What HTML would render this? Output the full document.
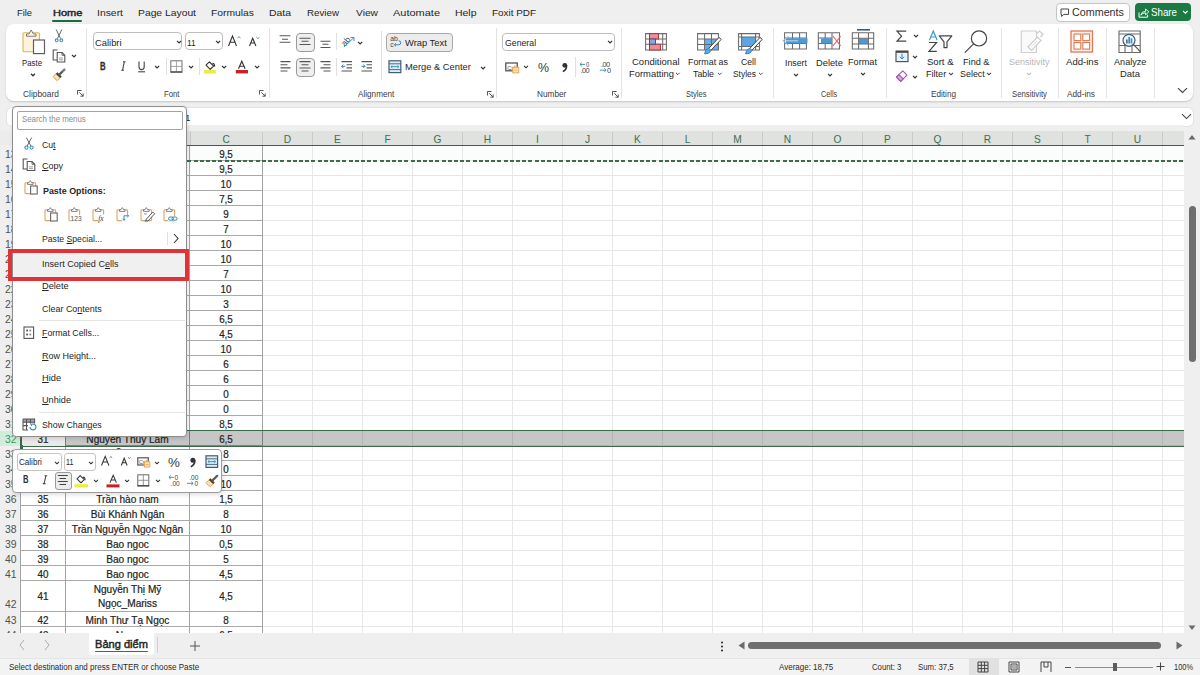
<!DOCTYPE html>
<html><head><meta charset="utf-8"><style>
html,body{margin:0;padding:0;width:1200px;height:675px;overflow:hidden;background:#efefef;}
body{position:relative;font-family:"Liberation Sans",sans-serif;}
.b{position:absolute;}
.t{position:absolute;white-space:nowrap;}
svg{overflow:visible;}
.g .t{-webkit-text-stroke:0.2px currentColor;}
.g .rh{-webkit-text-stroke:0;}
</style></head><body>
<div class="b" style="left:0px;top:0px;width:1200px;height:675px;background:#efefef;"></div>
<div class="t" style="left:17.00px;top:7px;font-size:9.8px;line-height:11.76px;color:#262626;font-weight:normal;transform:scaleX(0.9507);transform-origin:0 0;">File</div>
<div class="t" style="left:52.50px;top:7px;font-size:9.8px;line-height:11.76px;color:#262626;font-weight:normal;transform:scaleX(1.1274);transform-origin:0 0;-webkit-text-stroke:0.45px #262626;">Home</div>
<div class="t" style="left:96.50px;top:7px;font-size:9.8px;line-height:11.76px;color:#262626;font-weight:normal;transform:scaleX(1.0612);transform-origin:0 0;">Insert</div>
<div class="t" style="left:138.00px;top:7px;font-size:9.8px;line-height:11.76px;color:#262626;font-weight:normal;transform:scaleX(1.0540);transform-origin:0 0;">Page Layout</div>
<div class="t" style="left:211.00px;top:7px;font-size:9.8px;line-height:11.76px;color:#262626;font-weight:normal;transform:scaleX(1.0522);transform-origin:0 0;">Formulas</div>
<div class="t" style="left:269.00px;top:7px;font-size:9.8px;line-height:11.76px;color:#262626;font-weight:normal;transform:scaleX(1.0614);transform-origin:0 0;">Data</div>
<div class="t" style="left:307.00px;top:7px;font-size:9.8px;line-height:11.76px;color:#262626;font-weight:normal;transform:scaleX(0.9955);transform-origin:0 0;">Review</div>
<div class="t" style="left:355.50px;top:7px;font-size:9.8px;line-height:11.76px;color:#262626;font-weight:normal;transform:scaleX(1.0441);transform-origin:0 0;">View</div>
<div class="t" style="left:392.50px;top:7px;font-size:9.8px;line-height:11.76px;color:#262626;font-weight:normal;transform:scaleX(1.1205);transform-origin:0 0;">Automate</div>
<div class="t" style="left:454.50px;top:7px;font-size:9.8px;line-height:11.76px;color:#262626;font-weight:normal;transform:scaleX(1.0676);transform-origin:0 0;">Help</div>
<div class="t" style="left:492.00px;top:7px;font-size:9.8px;line-height:11.76px;color:#262626;font-weight:normal;transform:scaleX(1.0101);transform-origin:0 0;">Foxit PDF</div>
<div class="b" style="left:52px;top:19.5px;width:30px;height:2.5px;background:#1e6b41;border-radius:1px;"></div>
<div class="b" style="left:1056px;top:2.5px;width:72px;height:17px;background:#fff;border:1px solid #c4c4c4;border-radius:4px;"></div>
<div class="t" style="left:1072.00px;top:7px;font-size:10.2px;line-height:12.24px;color:#303030;font-weight:normal;transform:scaleX(1.0544);transform-origin:0 0;">Comments</div>
<div class="b" style="left:1135px;top:2.5px;width:56px;height:18px;background:#1b7a43;border-radius:4px;"></div>
<div class="t" style="left:1151.30px;top:7px;font-size:10.2px;line-height:12.24px;color:#fff;font-weight:normal;transform:scaleX(0.9547);transform-origin:0 0;">Share</div>
<div class="b" style="left:6px;top:24px;width:1187px;height:77px;background:#fff;border-radius:8px;box-shadow:0 1px 2px rgba(0,0,0,0.18);"></div>
<div class="b" style="left:86px;top:28px;width:1px;height:70px;background:#e3e3e3;"></div>
<div class="b" style="left:268.5px;top:28px;width:1px;height:70px;background:#e3e3e3;"></div>
<div class="b" style="left:495.5px;top:28px;width:1px;height:70px;background:#e3e3e3;"></div>
<div class="b" style="left:620.5px;top:28px;width:1px;height:70px;background:#e3e3e3;"></div>
<div class="b" style="left:772.5px;top:28px;width:1px;height:70px;background:#e3e3e3;"></div>
<div class="b" style="left:885.5px;top:28px;width:1px;height:70px;background:#e3e3e3;"></div>
<div class="b" style="left:1001px;top:28px;width:1px;height:70px;background:#e3e3e3;"></div>
<div class="b" style="left:1057.5px;top:28px;width:1px;height:70px;background:#e3e3e3;"></div>
<div class="b" style="left:1105.5px;top:28px;width:1px;height:70px;background:#e3e3e3;"></div>
<div class="b" style="left:1154px;top:28px;width:1px;height:70px;background:#e3e3e3;"></div>
<div class="b" style="left:335.5px;top:33px;width:1px;height:17px;background:#e0e0e0;"></div>
<div class="b" style="left:335.5px;top:58px;width:1px;height:18px;background:#e0e0e0;"></div>
<div class="b" style="left:380.5px;top:31px;width:1px;height:49px;background:#e0e0e0;"></div>
<div class="b" style="left:165.5px;top:58px;width:1px;height:17px;background:#e0e0e0;"></div>
<div class="b" style="left:199px;top:58px;width:1px;height:17px;background:#e0e0e0;"></div>
<div class="b" style="left:574.5px;top:57px;width:1px;height:20px;background:#e0e0e0;"></div>
<div class="t" style="left:23.30px;top:89px;font-size:8.6px;line-height:10.32px;color:#3b3b3b;font-weight:normal;transform:scaleX(0.9753);transform-origin:0 0;">Clipboard</div>
<div class="t" style="left:163.70px;top:89px;font-size:8.6px;line-height:10.32px;color:#3b3b3b;font-weight:normal;transform:scaleX(0.9012);transform-origin:0 0;">Font</div>
<div class="t" style="left:358.00px;top:89px;font-size:8.6px;line-height:10.32px;color:#3b3b3b;font-weight:normal;transform:scaleX(0.9496);transform-origin:0 0;">Alignment</div>
<div class="t" style="left:537.00px;top:89px;font-size:8.6px;line-height:10.32px;color:#3b3b3b;font-weight:normal;transform:scaleX(0.9584);transform-origin:0 0;">Number</div>
<div class="t" style="left:686.30px;top:89px;font-size:8.6px;line-height:10.32px;color:#3b3b3b;font-weight:normal;transform:scaleX(0.8748);transform-origin:0 0;">Styles</div>
<div class="t" style="left:820.80px;top:89px;font-size:8.6px;line-height:10.32px;color:#3b3b3b;font-weight:normal;transform:scaleX(0.8466);transform-origin:0 0;">Cells</div>
<div class="t" style="left:930.80px;top:89px;font-size:8.6px;line-height:10.32px;color:#3b3b3b;font-weight:normal;transform:scaleX(0.9500);transform-origin:0 0;">Editing</div>
<div class="t" style="left:1011.80px;top:89px;font-size:8.6px;line-height:10.32px;color:#3b3b3b;font-weight:normal;transform:scaleX(0.9044);transform-origin:0 0;">Sensitivity</div>
<div class="t" style="left:1067.00px;top:89px;font-size:8.6px;line-height:10.32px;color:#3b3b3b;font-weight:normal;transform:scaleX(0.9604);transform-origin:0 0;">Add-ins</div>
<div class="t" style="left:22.00px;top:58px;font-size:9.2px;line-height:11.04px;color:#262626;font-weight:normal;transform:scaleX(0.8508);transform-origin:0 0;">Paste</div>
<div class="b" style="left:93px;top:32px;width:89px;height:18px;background:#fff;border:1px solid #bdbdbd;border-radius:4px;box-sizing:border-box;"></div>
<div class="t" style="left:94.80px;top:37px;font-size:9.6px;line-height:11.52px;color:#262626;font-weight:normal;transform:scaleX(0.9774);transform-origin:0 0;">Calibri</div>
<div class="b" style="left:184.5px;top:32px;width:38px;height:18px;background:#fff;border:1px solid #bdbdbd;border-radius:4px;box-sizing:border-box;"></div>
<div class="t" style="left:187.10px;top:37px;font-size:9.6px;line-height:11.52px;color:#262626;font-weight:normal;transform:scaleX(0.8714);transform-origin:0 0;">11</div>
<div class="b" style="left:385.5px;top:32.5px;width:67.5px;height:19px;background:#ececec;border:1.3px solid #a8a8a8;border-radius:4px;box-sizing:border-box;"></div>
<div class="t" style="left:404.50px;top:38px;font-size:9.3px;line-height:11.16px;color:#262626;font-weight:normal;transform:scaleX(1.0066);transform-origin:0 0;">Wrap Text</div>
<div class="t" style="left:404.50px;top:62px;font-size:9.3px;line-height:11.16px;color:#262626;font-weight:normal;transform:scaleX(1.0022);transform-origin:0 0;">Merge &amp; Center</div>
<div class="b" style="left:295.5px;top:32.5px;width:19px;height:19px;background:#efefef;border:1.3px solid #9a9a9a;border-radius:4px;box-sizing:border-box;"></div>
<div class="b" style="left:295.5px;top:57.5px;width:19px;height:19px;background:#efefef;border:1.3px solid #9a9a9a;border-radius:4px;box-sizing:border-box;"></div>
<div class="b" style="left:502px;top:32.5px;width:113px;height:18.5px;background:#fff;border:1px solid #bdbdbd;border-radius:4px;box-sizing:border-box;"></div>
<div class="t" style="left:504.70px;top:38px;font-size:9.3px;line-height:11.16px;color:#262626;font-weight:normal;transform:scaleX(0.9394);transform-origin:0 0;">General</div>
<div class="t" style="left:632.00px;top:57px;font-size:9.2px;line-height:11.04px;color:#262626;font-weight:normal;transform:scaleX(1.0337);transform-origin:0 0;">Conditional</div>
<div class="t" style="left:629.00px;top:69px;font-size:9.2px;line-height:11.04px;color:#262626;font-weight:normal;transform:scaleX(1.0233);transform-origin:0 0;">Formatting</div>
<div class="t" style="left:688.00px;top:57px;font-size:9.2px;line-height:11.04px;color:#262626;font-weight:normal;transform:scaleX(0.9662);transform-origin:0 0;">Format as</div>
<div class="t" style="left:693.00px;top:69px;font-size:9.2px;line-height:11.04px;color:#262626;font-weight:normal;transform:scaleX(0.9551);transform-origin:0 0;">Table</div>
<div class="t" style="left:741.30px;top:57px;font-size:9.2px;line-height:11.04px;color:#262626;font-weight:normal;transform:scaleX(0.9452);transform-origin:0 0;">Cell</div>
<div class="t" style="left:733.00px;top:69px;font-size:9.2px;line-height:11.04px;color:#262626;font-weight:normal;transform:scaleX(0.9174);transform-origin:0 0;">Styles</div>
<div class="t" style="left:784.60px;top:58px;font-size:9.2px;line-height:11.04px;color:#262626;font-weight:normal;transform:scaleX(0.9565);transform-origin:0 0;">Insert</div>
<div class="t" style="left:815.80px;top:58px;font-size:9.2px;line-height:11.04px;color:#262626;font-weight:normal;transform:scaleX(1.0117);transform-origin:0 0;">Delete</div>
<div class="t" style="left:848.20px;top:57px;font-size:9.2px;line-height:11.04px;color:#262626;font-weight:normal;transform:scaleX(0.9959);transform-origin:0 0;">Format</div>
<div class="t" style="left:926.70px;top:57px;font-size:9.2px;line-height:11.04px;color:#262626;font-weight:normal;transform:scaleX(1.0400);transform-origin:0 0;">Sort &amp;</div>
<div class="t" style="left:925.80px;top:69px;font-size:9.2px;line-height:11.04px;color:#262626;font-weight:normal;transform:scaleX(0.9890);transform-origin:0 0;">Filter</div>
<div class="t" style="left:962.50px;top:57px;font-size:9.2px;line-height:11.04px;color:#262626;font-weight:normal;transform:scaleX(0.9967);transform-origin:0 0;">Find &amp;</div>
<div class="t" style="left:959.80px;top:69px;font-size:9.2px;line-height:11.04px;color:#262626;font-weight:normal;transform:scaleX(0.9697);transform-origin:0 0;">Select</div>
<div class="t" style="left:1008.80px;top:57px;font-size:9.2px;line-height:11.04px;color:#b5b5b5;font-weight:normal;transform:scaleX(0.9783);transform-origin:0 0;">Sensitivity</div>
<div class="t" style="left:1065.80px;top:57px;font-size:9.2px;line-height:11.04px;color:#262626;font-weight:normal;transform:scaleX(1.0421);transform-origin:0 0;">Add-ins</div>
<div class="t" style="left:1113.80px;top:57px;font-size:9.2px;line-height:11.04px;color:#262626;font-weight:normal;transform:scaleX(0.9923);transform-origin:0 0;">Analyze</div>
<div class="t" style="left:1120.00px;top:69px;font-size:9.2px;line-height:11.04px;color:#262626;font-weight:normal;transform:scaleX(1.0279);transform-origin:0 0;">Data</div>
<div class="b" style="left:7px;top:108px;width:1186px;height:17.5px;background:#fff;border-radius:5px;box-shadow:0 0 0 1px #e2e2e2;"></div>
<div class="t" style="left:185px;top:112px;font-size:9.8px;line-height:11.76px;color:#262626;font-weight:normal;">1</div>
<div class="b" style="left:0px;top:125px;width:1184px;height:6px;background:#efefef;"></div>
<div class="b" style="left:0px;top:131px;width:1184px;height:14px;background:#e0e2e0;"></div>
<div class="b" style="left:0px;top:131px;width:20px;height:14px;background:#ececec;"></div>
<div class="b" style="left:65px;top:132px;width:1px;height:13px;background:#c9cbc9;"></div>
<div class="t" style="left:-157.5px;width:400px;text-align:center;top:134px;font-size:10.2px;line-height:12.24px;color:#3f6f50;font-weight:normal;">A</div>
<div class="b" style="left:190px;top:132px;width:1px;height:13px;background:#c9cbc9;"></div>
<div class="t" style="left:-72.5px;width:400px;text-align:center;top:134px;font-size:10.2px;line-height:12.24px;color:#3f6f50;font-weight:normal;">B</div>
<div class="b" style="left:262px;top:132px;width:1px;height:13px;background:#c9cbc9;"></div>
<div class="t" style="left:26.25px;width:400px;text-align:center;top:134px;font-size:10.2px;line-height:12.24px;color:#3f6f50;font-weight:normal;">C</div>
<div class="b" style="left:312px;top:132px;width:1px;height:13px;background:#c9cbc9;"></div>
<div class="t" style="left:87.5px;width:400px;text-align:center;top:134px;font-size:10.2px;line-height:12.24px;color:#3f6f50;font-weight:normal;">D</div>
<div class="b" style="left:362px;top:132px;width:1px;height:13px;background:#c9cbc9;"></div>
<div class="t" style="left:137.5px;width:400px;text-align:center;top:134px;font-size:10.2px;line-height:12.24px;color:#3f6f50;font-weight:normal;">E</div>
<div class="b" style="left:412px;top:132px;width:1px;height:13px;background:#c9cbc9;"></div>
<div class="t" style="left:187.5px;width:400px;text-align:center;top:134px;font-size:10.2px;line-height:12.24px;color:#3f6f50;font-weight:normal;">F</div>
<div class="b" style="left:462px;top:132px;width:1px;height:13px;background:#c9cbc9;"></div>
<div class="t" style="left:237.5px;width:400px;text-align:center;top:134px;font-size:10.2px;line-height:12.24px;color:#3f6f50;font-weight:normal;">G</div>
<div class="b" style="left:512px;top:132px;width:1px;height:13px;background:#c9cbc9;"></div>
<div class="t" style="left:287.5px;width:400px;text-align:center;top:134px;font-size:10.2px;line-height:12.24px;color:#3f6f50;font-weight:normal;">H</div>
<div class="b" style="left:562px;top:132px;width:1px;height:13px;background:#c9cbc9;"></div>
<div class="t" style="left:337.5px;width:400px;text-align:center;top:134px;font-size:10.2px;line-height:12.24px;color:#3f6f50;font-weight:normal;">I</div>
<div class="b" style="left:612px;top:132px;width:1px;height:13px;background:#c9cbc9;"></div>
<div class="t" style="left:387.5px;width:400px;text-align:center;top:134px;font-size:10.2px;line-height:12.24px;color:#3f6f50;font-weight:normal;">J</div>
<div class="b" style="left:662px;top:132px;width:1px;height:13px;background:#c9cbc9;"></div>
<div class="t" style="left:437.5px;width:400px;text-align:center;top:134px;font-size:10.2px;line-height:12.24px;color:#3f6f50;font-weight:normal;">K</div>
<div class="b" style="left:712px;top:132px;width:1px;height:13px;background:#c9cbc9;"></div>
<div class="t" style="left:487.5px;width:400px;text-align:center;top:134px;font-size:10.2px;line-height:12.24px;color:#3f6f50;font-weight:normal;">L</div>
<div class="b" style="left:762px;top:132px;width:1px;height:13px;background:#c9cbc9;"></div>
<div class="t" style="left:537.5px;width:400px;text-align:center;top:134px;font-size:10.2px;line-height:12.24px;color:#3f6f50;font-weight:normal;">M</div>
<div class="b" style="left:812px;top:132px;width:1px;height:13px;background:#c9cbc9;"></div>
<div class="t" style="left:587.5px;width:400px;text-align:center;top:134px;font-size:10.2px;line-height:12.24px;color:#3f6f50;font-weight:normal;">N</div>
<div class="b" style="left:862px;top:132px;width:1px;height:13px;background:#c9cbc9;"></div>
<div class="t" style="left:637.5px;width:400px;text-align:center;top:134px;font-size:10.2px;line-height:12.24px;color:#3f6f50;font-weight:normal;">O</div>
<div class="b" style="left:912px;top:132px;width:1px;height:13px;background:#c9cbc9;"></div>
<div class="t" style="left:687.5px;width:400px;text-align:center;top:134px;font-size:10.2px;line-height:12.24px;color:#3f6f50;font-weight:normal;">P</div>
<div class="b" style="left:962px;top:132px;width:1px;height:13px;background:#c9cbc9;"></div>
<div class="t" style="left:737.5px;width:400px;text-align:center;top:134px;font-size:10.2px;line-height:12.24px;color:#3f6f50;font-weight:normal;">Q</div>
<div class="b" style="left:1012px;top:132px;width:1px;height:13px;background:#c9cbc9;"></div>
<div class="t" style="left:787.5px;width:400px;text-align:center;top:134px;font-size:10.2px;line-height:12.24px;color:#3f6f50;font-weight:normal;">R</div>
<div class="b" style="left:1062px;top:132px;width:1px;height:13px;background:#c9cbc9;"></div>
<div class="t" style="left:837.5px;width:400px;text-align:center;top:134px;font-size:10.2px;line-height:12.24px;color:#3f6f50;font-weight:normal;">S</div>
<div class="b" style="left:1112px;top:132px;width:1px;height:13px;background:#c9cbc9;"></div>
<div class="t" style="left:887.5px;width:400px;text-align:center;top:134px;font-size:10.2px;line-height:12.24px;color:#3f6f50;font-weight:normal;">T</div>
<div class="b" style="left:1162px;top:132px;width:1px;height:13px;background:#c9cbc9;"></div>
<div class="t" style="left:937.5px;width:400px;text-align:center;top:134px;font-size:10.2px;line-height:12.24px;color:#3f6f50;font-weight:normal;">U</div>
<div class="b" style="left:1212px;top:132px;width:1px;height:13px;background:#c9cbc9;"></div>
<div class="t" style="left:987.5px;width:400px;text-align:center;top:134px;font-size:10.2px;line-height:12.24px;color:#3f6f50;font-weight:normal;">V</div>
<div class="b" style="left:20px;top:145px;width:1164px;height:1.3px;background:#3a6049;"></div>
<div class="b" style="left:0px;top:146px;width:1184px;height:487px;background:#fff;"></div>
<div class="b" style="left:0px;top:146px;width:20px;height:487px;background:#efefef;"></div>
<div class="b g" style="left:0;top:146px;width:1184px;height:487px;overflow:hidden;">
<div class="b" style="left:21px;top:0px;width:1163px;height:14px;background:#fafdfb;"></div>
<div class="b" style="left:0px;top:285px;width:20px;height:15px;background:#d2ecdb;"></div>
<div class="b" style="left:262px;top:14px;width:922px;height:1px;background:#e7e7e7;"></div>
<div class="b" style="left:20px;top:14px;width:242px;height:1px;background:#a9a9a9;"></div>
<div class="b" style="left:262px;top:29px;width:922px;height:1px;background:#e7e7e7;"></div>
<div class="b" style="left:20px;top:29px;width:242px;height:1px;background:#a9a9a9;"></div>
<div class="b" style="left:262px;top:44px;width:922px;height:1px;background:#e7e7e7;"></div>
<div class="b" style="left:20px;top:44px;width:242px;height:1px;background:#a9a9a9;"></div>
<div class="b" style="left:262px;top:59px;width:922px;height:1px;background:#e7e7e7;"></div>
<div class="b" style="left:20px;top:59px;width:242px;height:1px;background:#a9a9a9;"></div>
<div class="b" style="left:262px;top:74px;width:922px;height:1px;background:#e7e7e7;"></div>
<div class="b" style="left:20px;top:74px;width:242px;height:1px;background:#a9a9a9;"></div>
<div class="b" style="left:262px;top:89px;width:922px;height:1px;background:#e7e7e7;"></div>
<div class="b" style="left:20px;top:89px;width:242px;height:1px;background:#a9a9a9;"></div>
<div class="b" style="left:262px;top:104px;width:922px;height:1px;background:#e7e7e7;"></div>
<div class="b" style="left:20px;top:104px;width:242px;height:1px;background:#a9a9a9;"></div>
<div class="b" style="left:262px;top:119px;width:922px;height:1px;background:#e7e7e7;"></div>
<div class="b" style="left:20px;top:119px;width:242px;height:1px;background:#a9a9a9;"></div>
<div class="b" style="left:262px;top:134px;width:922px;height:1px;background:#e7e7e7;"></div>
<div class="b" style="left:20px;top:134px;width:242px;height:1px;background:#a9a9a9;"></div>
<div class="b" style="left:262px;top:149px;width:922px;height:1px;background:#e7e7e7;"></div>
<div class="b" style="left:20px;top:149px;width:242px;height:1px;background:#a9a9a9;"></div>
<div class="b" style="left:262px;top:164px;width:922px;height:1px;background:#e7e7e7;"></div>
<div class="b" style="left:20px;top:164px;width:242px;height:1px;background:#a9a9a9;"></div>
<div class="b" style="left:262px;top:179px;width:922px;height:1px;background:#e7e7e7;"></div>
<div class="b" style="left:20px;top:179px;width:242px;height:1px;background:#a9a9a9;"></div>
<div class="b" style="left:262px;top:194px;width:922px;height:1px;background:#e7e7e7;"></div>
<div class="b" style="left:20px;top:194px;width:242px;height:1px;background:#a9a9a9;"></div>
<div class="b" style="left:262px;top:209px;width:922px;height:1px;background:#e7e7e7;"></div>
<div class="b" style="left:20px;top:209px;width:242px;height:1px;background:#a9a9a9;"></div>
<div class="b" style="left:262px;top:224px;width:922px;height:1px;background:#e7e7e7;"></div>
<div class="b" style="left:20px;top:224px;width:242px;height:1px;background:#a9a9a9;"></div>
<div class="b" style="left:262px;top:239px;width:922px;height:1px;background:#e7e7e7;"></div>
<div class="b" style="left:20px;top:239px;width:242px;height:1px;background:#a9a9a9;"></div>
<div class="b" style="left:262px;top:254px;width:922px;height:1px;background:#e7e7e7;"></div>
<div class="b" style="left:20px;top:254px;width:242px;height:1px;background:#a9a9a9;"></div>
<div class="b" style="left:262px;top:269px;width:922px;height:1px;background:#e7e7e7;"></div>
<div class="b" style="left:20px;top:269px;width:242px;height:1px;background:#a9a9a9;"></div>
<div class="b" style="left:262px;top:284px;width:922px;height:1px;background:#e7e7e7;"></div>
<div class="b" style="left:20px;top:284px;width:242px;height:1px;background:#a9a9a9;"></div>
<div class="b" style="left:262px;top:299px;width:922px;height:1px;background:#e7e7e7;"></div>
<div class="b" style="left:20px;top:299px;width:242px;height:1px;background:#a9a9a9;"></div>
<div class="b" style="left:262px;top:314px;width:922px;height:1px;background:#e7e7e7;"></div>
<div class="b" style="left:20px;top:314px;width:242px;height:1px;background:#a9a9a9;"></div>
<div class="b" style="left:262px;top:329px;width:922px;height:1px;background:#e7e7e7;"></div>
<div class="b" style="left:20px;top:329px;width:242px;height:1px;background:#a9a9a9;"></div>
<div class="b" style="left:262px;top:344px;width:922px;height:1px;background:#e7e7e7;"></div>
<div class="b" style="left:20px;top:344px;width:242px;height:1px;background:#a9a9a9;"></div>
<div class="b" style="left:262px;top:359px;width:922px;height:1px;background:#e7e7e7;"></div>
<div class="b" style="left:20px;top:359px;width:242px;height:1px;background:#a9a9a9;"></div>
<div class="b" style="left:262px;top:374px;width:922px;height:1px;background:#e7e7e7;"></div>
<div class="b" style="left:20px;top:374px;width:242px;height:1px;background:#a9a9a9;"></div>
<div class="b" style="left:262px;top:389px;width:922px;height:1px;background:#e7e7e7;"></div>
<div class="b" style="left:20px;top:389px;width:242px;height:1px;background:#a9a9a9;"></div>
<div class="b" style="left:262px;top:404px;width:922px;height:1px;background:#e7e7e7;"></div>
<div class="b" style="left:20px;top:404px;width:242px;height:1px;background:#a9a9a9;"></div>
<div class="b" style="left:262px;top:419px;width:922px;height:1px;background:#e7e7e7;"></div>
<div class="b" style="left:20px;top:419px;width:242px;height:1px;background:#a9a9a9;"></div>
<div class="b" style="left:262px;top:434px;width:922px;height:1px;background:#e7e7e7;"></div>
<div class="b" style="left:20px;top:434px;width:242px;height:1px;background:#a9a9a9;"></div>
<div class="b" style="left:262px;top:465px;width:922px;height:1px;background:#e7e7e7;"></div>
<div class="b" style="left:20px;top:465px;width:242px;height:1px;background:#a9a9a9;"></div>
<div class="b" style="left:262px;top:480px;width:922px;height:1px;background:#e7e7e7;"></div>
<div class="b" style="left:20px;top:480px;width:242px;height:1px;background:#a9a9a9;"></div>
<div class="b" style="left:262px;top:495px;width:922px;height:1px;background:#e7e7e7;"></div>
<div class="b" style="left:20px;top:495px;width:242px;height:1px;background:#a9a9a9;"></div>
<div class="b" style="left:312px;top:0px;width:1px;height:500px;background:#e7e7e7;"></div>
<div class="b" style="left:362px;top:0px;width:1px;height:500px;background:#e7e7e7;"></div>
<div class="b" style="left:412px;top:0px;width:1px;height:500px;background:#e7e7e7;"></div>
<div class="b" style="left:462px;top:0px;width:1px;height:500px;background:#e7e7e7;"></div>
<div class="b" style="left:512px;top:0px;width:1px;height:500px;background:#e7e7e7;"></div>
<div class="b" style="left:562px;top:0px;width:1px;height:500px;background:#e7e7e7;"></div>
<div class="b" style="left:612px;top:0px;width:1px;height:500px;background:#e7e7e7;"></div>
<div class="b" style="left:662px;top:0px;width:1px;height:500px;background:#e7e7e7;"></div>
<div class="b" style="left:712px;top:0px;width:1px;height:500px;background:#e7e7e7;"></div>
<div class="b" style="left:762px;top:0px;width:1px;height:500px;background:#e7e7e7;"></div>
<div class="b" style="left:812px;top:0px;width:1px;height:500px;background:#e7e7e7;"></div>
<div class="b" style="left:862px;top:0px;width:1px;height:500px;background:#e7e7e7;"></div>
<div class="b" style="left:912px;top:0px;width:1px;height:500px;background:#e7e7e7;"></div>
<div class="b" style="left:962px;top:0px;width:1px;height:500px;background:#e7e7e7;"></div>
<div class="b" style="left:1012px;top:0px;width:1px;height:500px;background:#e7e7e7;"></div>
<div class="b" style="left:1062px;top:0px;width:1px;height:500px;background:#e7e7e7;"></div>
<div class="b" style="left:1112px;top:0px;width:1px;height:500px;background:#e7e7e7;"></div>
<div class="b" style="left:1162px;top:0px;width:1px;height:500px;background:#e7e7e7;"></div>
<div class="b" style="left:1212px;top:0px;width:1px;height:500px;background:#e7e7e7;"></div>
<div class="b" style="left:65px;top:0px;width:1px;height:500px;background:#a3a3a3;"></div>
<div class="b" style="left:189px;top:0px;width:1px;height:500px;background:#a3a3a3;"></div>
<div class="b" style="left:262px;top:0px;width:1px;height:500px;background:#a3a3a3;"></div>
<div class="b" style="left:20px;top:0px;width:1px;height:500px;background:#a3a3a3;"></div>
<div class="b" style="left:21px;top:285px;width:1163px;height:15px;background:rgba(0,0,0,0.225);"></div>
<div class="b" style="left:21px;top:285px;width:44px;height:15px;background:#e9e9e9;"></div>
<div class="t rh" style="left:-383.5px;width:400px;text-align:right;top:3px;font-size:10.4px;line-height:12.48px;color:#505050;font-weight:normal;">13</div>
<div class="t " style="left:26.19999999999999px;width:400px;text-align:center;top:2px;font-size:10.6px;line-height:12.72px;color:#222;font-weight:normal;transform:scaleX(0.930);">9,5</div>
<div class="t rh" style="left:-383.5px;width:400px;text-align:right;top:18px;font-size:10.4px;line-height:12.48px;color:#505050;font-weight:normal;">14</div>
<div class="t " style="left:26.19999999999999px;width:400px;text-align:center;top:17px;font-size:10.6px;line-height:12.72px;color:#222;font-weight:normal;transform:scaleX(0.930);">9,5</div>
<div class="t rh" style="left:-383.5px;width:400px;text-align:right;top:33px;font-size:10.4px;line-height:12.48px;color:#505050;font-weight:normal;">15</div>
<div class="t " style="left:26.19999999999999px;width:400px;text-align:center;top:32px;font-size:10.6px;line-height:12.72px;color:#222;font-weight:normal;transform:scaleX(0.930);">10</div>
<div class="t rh" style="left:-383.5px;width:400px;text-align:right;top:48px;font-size:10.4px;line-height:12.48px;color:#505050;font-weight:normal;">16</div>
<div class="t " style="left:26.19999999999999px;width:400px;text-align:center;top:47px;font-size:10.6px;line-height:12.72px;color:#222;font-weight:normal;transform:scaleX(0.930);">7,5</div>
<div class="t rh" style="left:-383.5px;width:400px;text-align:right;top:63px;font-size:10.4px;line-height:12.48px;color:#505050;font-weight:normal;">17</div>
<div class="t " style="left:26.19999999999999px;width:400px;text-align:center;top:62px;font-size:10.6px;line-height:12.72px;color:#222;font-weight:normal;transform:scaleX(0.930);">9</div>
<div class="t rh" style="left:-383.5px;width:400px;text-align:right;top:78px;font-size:10.4px;line-height:12.48px;color:#505050;font-weight:normal;">18</div>
<div class="t " style="left:26.19999999999999px;width:400px;text-align:center;top:77px;font-size:10.6px;line-height:12.72px;color:#222;font-weight:normal;transform:scaleX(0.930);">7</div>
<div class="t rh" style="left:-383.5px;width:400px;text-align:right;top:93px;font-size:10.4px;line-height:12.48px;color:#505050;font-weight:normal;">19</div>
<div class="t " style="left:26.19999999999999px;width:400px;text-align:center;top:92px;font-size:10.6px;line-height:12.72px;color:#222;font-weight:normal;transform:scaleX(0.930);">10</div>
<div class="t rh" style="left:-383.5px;width:400px;text-align:right;top:108px;font-size:10.4px;line-height:12.48px;color:#505050;font-weight:normal;">20</div>
<div class="t " style="left:26.19999999999999px;width:400px;text-align:center;top:107px;font-size:10.6px;line-height:12.72px;color:#222;font-weight:normal;transform:scaleX(0.930);">10</div>
<div class="t rh" style="left:-383.5px;width:400px;text-align:right;top:123px;font-size:10.4px;line-height:12.48px;color:#505050;font-weight:normal;">21</div>
<div class="t " style="left:26.19999999999999px;width:400px;text-align:center;top:122px;font-size:10.6px;line-height:12.72px;color:#222;font-weight:normal;transform:scaleX(0.930);">7</div>
<div class="t rh" style="left:-383.5px;width:400px;text-align:right;top:138px;font-size:10.4px;line-height:12.48px;color:#505050;font-weight:normal;">22</div>
<div class="t " style="left:26.19999999999999px;width:400px;text-align:center;top:137px;font-size:10.6px;line-height:12.72px;color:#222;font-weight:normal;transform:scaleX(0.930);">10</div>
<div class="t rh" style="left:-383.5px;width:400px;text-align:right;top:153px;font-size:10.4px;line-height:12.48px;color:#505050;font-weight:normal;">23</div>
<div class="t " style="left:26.19999999999999px;width:400px;text-align:center;top:152px;font-size:10.6px;line-height:12.72px;color:#222;font-weight:normal;transform:scaleX(0.930);">3</div>
<div class="t rh" style="left:-383.5px;width:400px;text-align:right;top:168px;font-size:10.4px;line-height:12.48px;color:#505050;font-weight:normal;">24</div>
<div class="t " style="left:26.19999999999999px;width:400px;text-align:center;top:167px;font-size:10.6px;line-height:12.72px;color:#222;font-weight:normal;transform:scaleX(0.930);">6,5</div>
<div class="t rh" style="left:-383.5px;width:400px;text-align:right;top:183px;font-size:10.4px;line-height:12.48px;color:#505050;font-weight:normal;">25</div>
<div class="t " style="left:26.19999999999999px;width:400px;text-align:center;top:182px;font-size:10.6px;line-height:12.72px;color:#222;font-weight:normal;transform:scaleX(0.930);">4,5</div>
<div class="t rh" style="left:-383.5px;width:400px;text-align:right;top:198px;font-size:10.4px;line-height:12.48px;color:#505050;font-weight:normal;">26</div>
<div class="t " style="left:26.19999999999999px;width:400px;text-align:center;top:197px;font-size:10.6px;line-height:12.72px;color:#222;font-weight:normal;transform:scaleX(0.930);">10</div>
<div class="t rh" style="left:-383.5px;width:400px;text-align:right;top:213px;font-size:10.4px;line-height:12.48px;color:#505050;font-weight:normal;">27</div>
<div class="t " style="left:26.19999999999999px;width:400px;text-align:center;top:212px;font-size:10.6px;line-height:12.72px;color:#222;font-weight:normal;transform:scaleX(0.930);">6</div>
<div class="t rh" style="left:-383.5px;width:400px;text-align:right;top:228px;font-size:10.4px;line-height:12.48px;color:#505050;font-weight:normal;">28</div>
<div class="t " style="left:26.19999999999999px;width:400px;text-align:center;top:227px;font-size:10.6px;line-height:12.72px;color:#222;font-weight:normal;transform:scaleX(0.930);">6</div>
<div class="t rh" style="left:-383.5px;width:400px;text-align:right;top:243px;font-size:10.4px;line-height:12.48px;color:#505050;font-weight:normal;">29</div>
<div class="t " style="left:26.19999999999999px;width:400px;text-align:center;top:242px;font-size:10.6px;line-height:12.72px;color:#222;font-weight:normal;transform:scaleX(0.930);">0</div>
<div class="t rh" style="left:-383.5px;width:400px;text-align:right;top:258px;font-size:10.4px;line-height:12.48px;color:#505050;font-weight:normal;">30</div>
<div class="t " style="left:26.19999999999999px;width:400px;text-align:center;top:257px;font-size:10.6px;line-height:12.72px;color:#222;font-weight:normal;transform:scaleX(0.930);">0</div>
<div class="t rh" style="left:-383.5px;width:400px;text-align:right;top:273px;font-size:10.4px;line-height:12.48px;color:#505050;font-weight:normal;">31</div>
<div class="t " style="left:26.19999999999999px;width:400px;text-align:center;top:272px;font-size:10.6px;line-height:12.72px;color:#222;font-weight:normal;transform:scaleX(0.930);">8,5</div>
<div class="t rh" style="left:-383.5px;width:400px;text-align:right;top:288px;font-size:10.4px;line-height:12.48px;color:#3f9464;font-weight:normal;">32</div>
<div class="t " style="left:-157.2px;width:400px;text-align:center;top:287px;font-size:10.6px;line-height:12.72px;color:#222;font-weight:normal;transform:scaleX(0.930);">31</div>
<div class="t " style="left:-72.5px;width:400px;text-align:center;top:288px;font-size:10.1px;line-height:12.12px;color:#222;font-weight:normal;">Nguyễn Thùy Lâm</div>
<div class="t " style="left:26.19999999999999px;width:400px;text-align:center;top:287px;font-size:10.6px;line-height:12.72px;color:#222;font-weight:normal;transform:scaleX(0.930);">6,5</div>
<div class="t rh" style="left:-383.5px;width:400px;text-align:right;top:303px;font-size:10.4px;line-height:12.48px;color:#505050;font-weight:normal;">33</div>
<div class="t " style="left:-157.2px;width:400px;text-align:center;top:302px;font-size:10.6px;line-height:12.72px;color:#222;font-weight:normal;transform:scaleX(0.930);">32</div>
<div class="t " style="left:-72.5px;width:400px;text-align:center;top:303px;font-size:10.1px;line-height:12.12px;color:#222;font-weight:normal;">Nguyễn Văn An</div>
<div class="t " style="left:26.19999999999999px;width:400px;text-align:center;top:302px;font-size:10.6px;line-height:12.72px;color:#222;font-weight:normal;transform:scaleX(0.930);">8</div>
<div class="t rh" style="left:-383.5px;width:400px;text-align:right;top:318px;font-size:10.4px;line-height:12.48px;color:#505050;font-weight:normal;">34</div>
<div class="t " style="left:-157.2px;width:400px;text-align:center;top:317px;font-size:10.6px;line-height:12.72px;color:#222;font-weight:normal;transform:scaleX(0.930);">33</div>
<div class="t " style="left:-72.5px;width:400px;text-align:center;top:318px;font-size:10.1px;line-height:12.12px;color:#222;font-weight:normal;">Trần Minh</div>
<div class="t " style="left:26.19999999999999px;width:400px;text-align:center;top:317px;font-size:10.6px;line-height:12.72px;color:#222;font-weight:normal;transform:scaleX(0.930);">0</div>
<div class="t rh" style="left:-383.5px;width:400px;text-align:right;top:333px;font-size:10.4px;line-height:12.48px;color:#505050;font-weight:normal;">35</div>
<div class="t " style="left:-157.2px;width:400px;text-align:center;top:332px;font-size:10.6px;line-height:12.72px;color:#222;font-weight:normal;transform:scaleX(0.930);">34</div>
<div class="t " style="left:-72.5px;width:400px;text-align:center;top:333px;font-size:10.1px;line-height:12.12px;color:#222;font-weight:normal;">Lê Hoàng</div>
<div class="t " style="left:26.19999999999999px;width:400px;text-align:center;top:332px;font-size:10.6px;line-height:12.72px;color:#222;font-weight:normal;transform:scaleX(0.930);">10</div>
<div class="t rh" style="left:-383.5px;width:400px;text-align:right;top:348px;font-size:10.4px;line-height:12.48px;color:#505050;font-weight:normal;">36</div>
<div class="t " style="left:-157.2px;width:400px;text-align:center;top:347px;font-size:10.6px;line-height:12.72px;color:#222;font-weight:normal;transform:scaleX(0.930);">35</div>
<div class="t " style="left:-72.5px;width:400px;text-align:center;top:348px;font-size:10.1px;line-height:12.12px;color:#222;font-weight:normal;">Trần hào nam</div>
<div class="t " style="left:26.19999999999999px;width:400px;text-align:center;top:347px;font-size:10.6px;line-height:12.72px;color:#222;font-weight:normal;transform:scaleX(0.930);">1,5</div>
<div class="t rh" style="left:-383.5px;width:400px;text-align:right;top:363px;font-size:10.4px;line-height:12.48px;color:#505050;font-weight:normal;">37</div>
<div class="t " style="left:-157.2px;width:400px;text-align:center;top:362px;font-size:10.6px;line-height:12.72px;color:#222;font-weight:normal;transform:scaleX(0.930);">36</div>
<div class="t " style="left:-72.5px;width:400px;text-align:center;top:363px;font-size:10.1px;line-height:12.12px;color:#222;font-weight:normal;">Bùi Khánh Ngân</div>
<div class="t " style="left:26.19999999999999px;width:400px;text-align:center;top:362px;font-size:10.6px;line-height:12.72px;color:#222;font-weight:normal;transform:scaleX(0.930);">8</div>
<div class="t rh" style="left:-383.5px;width:400px;text-align:right;top:378px;font-size:10.4px;line-height:12.48px;color:#505050;font-weight:normal;">38</div>
<div class="t " style="left:-157.2px;width:400px;text-align:center;top:377px;font-size:10.6px;line-height:12.72px;color:#222;font-weight:normal;transform:scaleX(0.930);">37</div>
<div class="t " style="left:-72.5px;width:400px;text-align:center;top:378px;font-size:10.1px;line-height:12.12px;color:#222;font-weight:normal;">Trần Nguyễn Ngọc Ngân</div>
<div class="t " style="left:26.19999999999999px;width:400px;text-align:center;top:377px;font-size:10.6px;line-height:12.72px;color:#222;font-weight:normal;transform:scaleX(0.930);">10</div>
<div class="t rh" style="left:-383.5px;width:400px;text-align:right;top:393px;font-size:10.4px;line-height:12.48px;color:#505050;font-weight:normal;">39</div>
<div class="t " style="left:-157.2px;width:400px;text-align:center;top:392px;font-size:10.6px;line-height:12.72px;color:#222;font-weight:normal;transform:scaleX(0.930);">38</div>
<div class="t " style="left:-72.5px;width:400px;text-align:center;top:393px;font-size:10.1px;line-height:12.12px;color:#222;font-weight:normal;">Bao ngoc</div>
<div class="t " style="left:26.19999999999999px;width:400px;text-align:center;top:392px;font-size:10.6px;line-height:12.72px;color:#222;font-weight:normal;transform:scaleX(0.930);">0,5</div>
<div class="t rh" style="left:-383.5px;width:400px;text-align:right;top:408px;font-size:10.4px;line-height:12.48px;color:#505050;font-weight:normal;">40</div>
<div class="t " style="left:-157.2px;width:400px;text-align:center;top:407px;font-size:10.6px;line-height:12.72px;color:#222;font-weight:normal;transform:scaleX(0.930);">39</div>
<div class="t " style="left:-72.5px;width:400px;text-align:center;top:408px;font-size:10.1px;line-height:12.12px;color:#222;font-weight:normal;">Bao ngoc</div>
<div class="t " style="left:26.19999999999999px;width:400px;text-align:center;top:407px;font-size:10.6px;line-height:12.72px;color:#222;font-weight:normal;transform:scaleX(0.930);">5</div>
<div class="t rh" style="left:-383.5px;width:400px;text-align:right;top:423px;font-size:10.4px;line-height:12.48px;color:#505050;font-weight:normal;">41</div>
<div class="t " style="left:-157.2px;width:400px;text-align:center;top:422px;font-size:10.6px;line-height:12.72px;color:#222;font-weight:normal;transform:scaleX(0.930);">40</div>
<div class="t " style="left:-72.5px;width:400px;text-align:center;top:423px;font-size:10.1px;line-height:12.12px;color:#222;font-weight:normal;">Bao ngoc</div>
<div class="t " style="left:26.19999999999999px;width:400px;text-align:center;top:422px;font-size:10.6px;line-height:12.72px;color:#222;font-weight:normal;transform:scaleX(0.930);">4,5</div>
<div class="t rh" style="left:-383.5px;width:400px;text-align:right;top:453px;font-size:10.4px;line-height:12.48px;color:#505050;font-weight:normal;">42</div>
<div class="t " style="left:-157.2px;width:400px;text-align:center;top:444px;font-size:10.6px;line-height:12.72px;color:#222;font-weight:normal;transform:scaleX(0.930);">41</div>
<div class="t " style="left:-72.5px;width:400px;text-align:center;top:438px;font-size:10.1px;line-height:12.12px;color:#222;font-weight:normal;">Nguyễn Thị Mỹ</div>
<div class="t " style="left:-72.5px;width:400px;text-align:center;top:452px;font-size:10.1px;line-height:12.12px;color:#222;font-weight:normal;">Ngọc_Mariss</div>
<div class="t " style="left:26.19999999999999px;width:400px;text-align:center;top:444px;font-size:10.6px;line-height:12.72px;color:#222;font-weight:normal;transform:scaleX(0.930);">4,5</div>
<div class="t rh" style="left:-383.5px;width:400px;text-align:right;top:469px;font-size:10.4px;line-height:12.48px;color:#505050;font-weight:normal;">43</div>
<div class="t " style="left:-157.2px;width:400px;text-align:center;top:468px;font-size:10.6px;line-height:12.72px;color:#222;font-weight:normal;transform:scaleX(0.930);">42</div>
<div class="t " style="left:-72.5px;width:400px;text-align:center;top:469px;font-size:10.1px;line-height:12.12px;color:#222;font-weight:normal;">Minh Thư Tạ Ngọc</div>
<div class="t " style="left:26.19999999999999px;width:400px;text-align:center;top:468px;font-size:10.6px;line-height:12.72px;color:#222;font-weight:normal;transform:scaleX(0.930);">8</div>
<div class="t rh" style="left:-383.5px;width:400px;text-align:right;top:484px;font-size:10.4px;line-height:12.48px;color:#505050;font-weight:normal;">44</div>
<div class="t " style="left:-157.2px;width:400px;text-align:center;top:483px;font-size:10.6px;line-height:12.72px;color:#222;font-weight:normal;transform:scaleX(0.930);">43</div>
<div class="t " style="left:-72.5px;width:400px;text-align:center;top:484px;font-size:10.1px;line-height:12.12px;color:#222;font-weight:normal;">Ngoc</div>
<div class="t " style="left:26.19999999999999px;width:400px;text-align:center;top:483px;font-size:10.6px;line-height:12.72px;color:#222;font-weight:normal;transform:scaleX(0.930);">6,5</div>
<div class="b" style="left:20px;top:284px;width:1164px;height:1.2px;background:#3a6a4a;"></div>
<div class="b" style="left:20px;top:299.8px;width:1164px;height:1.3px;background:#3a6a4a;"></div>
<div class="b" style="left:20px;top:285px;width:1.6px;height:15px;background:#3a6a4a;"></div>
<div class="b" style="left:19.5px;top:299px;width:3.5px;height:3.5px;background:#3a6a4a;"></div>
<div class="b" style="left:20px;top:14px;width:1164px;height:1.5px;background:repeating-linear-gradient(90deg,#3b6e4c 0,#3b6e4c 4px,transparent 4px,transparent 6.2px);"></div>
</div>
<div class="b" style="left:1184px;top:131px;width:16px;height:502px;background:#efefef;"></div>
<svg class="b" style="left:1188px;top:134px;" width="8" height="6" viewBox="0 0 8 6"><path d="M0.5 5.5 L4 1 L7.5 5.5 Z" fill="#6a6a6a"/></svg>
<svg class="b" style="left:1188px;top:625px;" width="8" height="6" viewBox="0 0 8 6"><path d="M0.5 0.5 L4 5 L7.5 0.5 Z" fill="#6a6a6a"/></svg>
<div class="b" style="left:1189px;top:205.5px;width:6.5px;height:156.5px;background:#6f6f6f;border-radius:3.5px;"></div>
<div class="b" style="left:0px;top:633px;width:1200px;height:25px;background:#efefef;"></div>
<svg class="b" style="left:18px;top:639px;" width="8" height="12" viewBox="0 0 8 12"><path d="M6 1 L2 6 L6 11" fill="none" stroke="#ababab" stroke-width="1"/></svg>
<svg class="b" style="left:43px;top:639px;" width="8" height="12" viewBox="0 0 8 12"><path d="M2 1 L6 6 L2 11" fill="none" stroke="#ababab" stroke-width="1"/></svg>
<div class="b" style="left:88.5px;top:633px;width:65.5px;height:22px;background:#fff;border-radius:0 0 4px 4px;"></div>
<div class="t" style="left:95.40px;top:638px;font-size:10.6px;line-height:12.72px;color:#262626;font-weight:normal;transform:scaleX(1.0441);transform-origin:0 0;-webkit-text-stroke:0.45px #262626;">Bảng điểm</div>
<div class="b" style="left:95px;top:650.5px;width:53px;height:1.6px;background:#2b7a4b;border-radius:1px;"></div>
<div class="b" style="left:157px;top:637px;width:1px;height:16px;background:#d0d0d0;"></div>
<svg class="b" style="left:189px;top:639.5px;" width="12" height="12" viewBox="0 0 12 12"><path d="M6 1 V11 M1 6 H11" stroke="#555" stroke-width="1"/></svg>
<svg class="b" style="left:719px;top:641px;" width="6" height="11" viewBox="0 0 6 11"><circle cx="3" cy="1.5" r="1" fill="#222"/><circle cx="3" cy="5.5" r="1" fill="#222"/><circle cx="3" cy="9.5" r="1" fill="#222"/></svg>
<svg class="b" style="left:738px;top:641px;" width="7" height="9" viewBox="0 0 7 9"><path d="M6.5 0.5 V8.5 L0.5 4.5 Z" fill="#6a6a6a"/></svg>
<div class="b" style="left:748px;top:641.5px;width:413px;height:7.3px;background:#6e6e6e;border-radius:3.6px;"></div>
<svg class="b" style="left:1176px;top:641px;" width="7" height="9" viewBox="0 0 7 9"><path d="M0.5 0.5 V8.5 L6.5 4.5 Z" fill="#6a6a6a"/></svg>
<div class="b" style="left:0px;top:658px;width:1200px;height:17px;background:#f3f3f3;"></div>
<div class="b" style="left:0px;top:657.5px;width:1200px;height:1px;background:#e4e4e4;"></div>
<div class="t" style="left:8.80px;top:663px;font-size:8.3px;line-height:9.96px;color:#2b2b2b;font-weight:normal;transform:scaleX(0.9655);transform-origin:0 0;">Select destination and press ENTER or choose Paste</div>
<div class="t" style="left:778.60px;top:663px;font-size:8.3px;line-height:9.96px;color:#2b2b2b;font-weight:normal;transform:scaleX(0.9635);transform-origin:0 0;">Average: 18,75</div>
<div class="t" style="left:871.70px;top:663px;font-size:8.3px;line-height:9.96px;color:#2b2b2b;font-weight:normal;transform:scaleX(0.9339);transform-origin:0 0;">Count: 3</div>
<div class="t" style="left:918.00px;top:663px;font-size:8.3px;line-height:9.96px;color:#2b2b2b;font-weight:normal;transform:scaleX(0.9432);transform-origin:0 0;">Sum: 37,5</div>
<div class="b" style="left:968.5px;top:658px;width:30px;height:17px;background:#e1e1e1;"></div>
<svg class="b" style="left:977px;top:661px;" width="12" height="12" viewBox="0 0 12 12"><path d="M1 1H11V11H1Z M1 4.3H11 M1 7.6H11 M4.3 1V11 M7.6 1V11" fill="none" stroke="#444" stroke-width="1"/></svg>
<svg class="b" style="left:1008px;top:661px;" width="12" height="12" viewBox="0 0 12 12"><path d="M1 1H11V11H1Z M3 3H9V9H3Z" fill="none" stroke="#444" stroke-width="1"/><path d="M4 5H8 M4 7H8" stroke="#444" stroke-width="0.8"/></svg>
<svg class="b" style="left:1040px;top:661px;" width="12" height="12" viewBox="0 0 12 12"><path d="M1 11V1H11V11 M4 1V6H8V1" fill="none" stroke="#444" stroke-width="1"/></svg>
<div class="b" style="left:1065px;top:666.5px;width:6px;height:1px;background:#555;"></div>
<div class="b" style="left:1075px;top:666.6px;width:78px;height:1.3px;background:#8c8c8c;"></div>
<div class="b" style="left:1113px;top:662.5px;width:4px;height:8.5px;background:#5c5c5c;"></div>
<svg class="b" style="left:1156px;top:662px;" width="9" height="9" viewBox="0 0 9 9"><path d="M4.5 0.5V8.5 M0.5 4.5H8.5" stroke="#444" stroke-width="1"/></svg>
<div class="t" style="left:1174.00px;top:663px;font-size:8.3px;line-height:9.96px;color:#2b2b2b;font-weight:normal;transform:scaleX(0.8942);transform-origin:0 0;">100%</div>
<div class="b" style="left:12px;top:106px;width:175px;height:331px;background:#fff;border:1px solid #8e8e8e;border-radius:4px;box-sizing:border-box;box-shadow:1px 2px 4px rgba(0,0,0,0.12);"></div>
<div class="b" style="left:16.5px;top:110.5px;width:166px;height:19px;background:#fff;border:1px solid #a4a4a4;border-radius:2px;box-sizing:border-box;"></div>
<div class="t" style="left:22.30px;top:114px;font-size:8.6px;line-height:10.32px;color:#8a8a8a;font-weight:normal;transform:scaleX(0.9142);transform-origin:0 0;">Search the menus</div>
<div class="t" style="left:42.00px;top:140px;font-size:9.0px;line-height:10.80px;color:#262626;font-weight:normal;transform:scaleX(0.9646);transform-origin:0 0;">Cu<u>t</u></div>
<div class="t" style="left:42.00px;top:161px;font-size:9.0px;line-height:10.80px;color:#262626;font-weight:normal;transform:scaleX(1.0040);transform-origin:0 0;"><u>C</u>opy</div>
<div class="t" style="left:42.60px;top:186px;font-size:9.0px;line-height:10.80px;color:#262626;font-weight:bold;transform:scaleX(0.9859);transform-origin:0 0;">Paste Options:</div>
<div class="t" style="left:42.00px;top:234px;font-size:9.0px;line-height:10.80px;color:#262626;font-weight:normal;transform:scaleX(0.9608);transform-origin:0 0;">Paste <u>S</u>pecial...</div>
<div class="b" style="left:167px;top:232px;width:1px;height:13px;background:#e0e0e0;"></div>
<svg class="b" style="left:172px;top:233px;" width="8" height="11" viewBox="0 0 8 11"><path d="M2 1 L6 5.5 L2 10" fill="none" stroke="#333" stroke-width="1.1"/></svg>
<div class="b" style="left:13px;top:253px;width:172px;height:23.5px;background:#f0f0f0;"></div>
<div class="t" style="left:42.20px;top:259px;font-size:9.0px;line-height:10.80px;color:#262626;font-weight:normal;transform:scaleX(1.0072);transform-origin:0 0;">Insert Copied C<u>e</u>lls</div>
<div class="t" style="left:42.20px;top:281px;font-size:9.0px;line-height:10.80px;color:#262626;font-weight:normal;transform:scaleX(1.0265);transform-origin:0 0;"><u>D</u>elete</div>
<div class="t" style="left:42.20px;top:304px;font-size:9.0px;line-height:10.80px;color:#262626;font-weight:normal;transform:scaleX(0.9945);transform-origin:0 0;">Clear Co<u>n</u>tents</div>
<div class="b" style="left:39px;top:320px;width:146px;height:1px;background:#e3e3e3;"></div>
<div class="t" style="left:42.20px;top:328px;font-size:9.0px;line-height:10.80px;color:#262626;font-weight:normal;transform:scaleX(0.9778);transform-origin:0 0;"><u>F</u>ormat Cells...</div>
<div class="t" style="left:42.20px;top:351px;font-size:9.0px;line-height:10.80px;color:#262626;font-weight:normal;transform:scaleX(1.0010);transform-origin:0 0;"><u>R</u>ow Height...</div>
<div class="t" style="left:42.20px;top:373px;font-size:9.0px;line-height:10.80px;color:#262626;font-weight:normal;transform:scaleX(1.0327);transform-origin:0 0;"><u>H</u>ide</div>
<div class="t" style="left:42.20px;top:395px;font-size:9.0px;line-height:10.80px;color:#262626;font-weight:normal;transform:scaleX(1.0165);transform-origin:0 0;"><u>U</u>nhide</div>
<div class="b" style="left:39px;top:412px;width:146px;height:1px;background:#e3e3e3;"></div>
<div class="t" style="left:42.20px;top:420px;font-size:9.0px;line-height:10.80px;color:#262626;font-weight:normal;transform:scaleX(0.9784);transform-origin:0 0;">Show Chan<u>g</u>es</div>
<div class="b" style="left:8px;top:249px;width:181px;height:31.5px;border:4.3px solid #df3338;box-sizing:border-box;"></div>
<div class="b" style="left:12px;top:449px;width:210px;height:44px;background:#fff;border:1px solid #9c9c9c;border-radius:4px;box-sizing:border-box;box-shadow:1px 2px 4px rgba(0,0,0,0.12);"></div>
<div class="b" style="left:17px;top:452.5px;width:44.5px;height:18px;background:#fff;border:1px solid #c4c4c4;border-radius:3px;box-sizing:border-box;"></div>
<div class="t" style="left:18.90px;top:457px;font-size:8.6px;line-height:10.32px;color:#262626;font-weight:normal;transform:scaleX(0.9393);transform-origin:0 0;">Calibri</div>
<div class="b" style="left:63.5px;top:452.5px;width:32px;height:18px;background:#fff;border:1px solid #c4c4c4;border-radius:3px;box-sizing:border-box;"></div>
<div class="t" style="left:65.70px;top:457px;font-size:8.6px;line-height:10.32px;color:#262626;font-weight:normal;transform:scaleX(0.8162);transform-origin:0 0;">11</div>
<div class="b" style="left:55px;top:471.5px;width:16.5px;height:18px;background:#ececec;border:1px solid #9a9a9a;border-radius:3px;box-sizing:border-box;"></div>
<svg class="b" style="left:22px;top:29px;" width="24" height="26" viewBox="0 0 24 26"><rect x="1" y="3.8" width="16.5" height="19" rx="1" fill="#fcf3d9" stroke="#d9b45a" stroke-width="1.1"/><path d="M4.5 7.2 V5 H7 L9.2 1 L11.4 5 H14 V7.2 Z" fill="#fff" stroke="#6a6a6a" stroke-width="0.9"/><rect x="11.5" y="11" width="11" height="13.6" fill="#fff" stroke="#606060" stroke-width="1.2"/></svg>
<svg class="b" style="left:29.5px;top:71.5px;" width="6" height="6" viewBox="0 0 6 6"><path d="M1 1.8 L3.0 3.8 L5 1.8" fill="none" stroke="#333" stroke-width="1.3"/></svg>
<svg class="b" style="left:54px;top:29px;" width="10" height="14" viewBox="0 0 10 14"><path d="M2.2 0.5 L6.6 9.6 M7.8 0.5 L3.4 9.6" stroke="#555" stroke-width="0.9" fill="none"/><circle cx="2.7" cy="11.3" r="1.4" fill="none" stroke="#3e8fc0" stroke-width="1.1"/><circle cx="7.3" cy="11.3" r="1.4" fill="none" stroke="#3e8fc0" stroke-width="1.1"/></svg>
<svg class="b" style="left:52px;top:48.5px;" width="14" height="14" viewBox="0 0 14 14"><path d="M5.5 1 H1.2 V11 H5" fill="none" stroke="#555" stroke-width="1.1"/><path d="M2.5 1 V0.8" stroke="#555"/><path d="M5.2 3.5 H10 L12.8 6.3 V13 H5.2 Z" fill="#fff" stroke="#555" stroke-width="1.1"/><path d="M10 3.5 V6.3 H12.8" fill="none" stroke="#555" stroke-width="0.9"/><path d="M7 9 H11 M7 10.8 H11" stroke="#777" stroke-width="0.7"/></svg>
<svg class="b" style="left:70.5px;top:53px;" width="6" height="6" viewBox="0 0 6 6"><path d="M1 1.8 L3.0 3.8 L5 1.8" fill="none" stroke="#333" stroke-width="1.2"/></svg>
<svg class="b" style="left:52px;top:68px;" width="14" height="13" viewBox="0 0 14 13"><path d="M1.2 8.6 L5.4 4.4 L9.6 8.6 L5.4 12.6 Q3 11.5 1.2 8.6 Z" fill="#fbe2b6" stroke="#e3a04c" stroke-width="1" stroke-linejoin="round"/><path d="M4.6 5.2 L8.8 9.4" stroke="#3c3c3c" stroke-width="2"/><path d="M7.6 6.4 L12.2 1.8" stroke="#5a5a5a" stroke-width="2.2" stroke-linecap="round"/><path d="M11 3 L12.4 1.6" stroke="#6f8296" stroke-width="2.2" stroke-linecap="round"/></svg>
<svg class="b" style="left:76.5px;top:90.0px;" width="7" height="7" viewBox="0 0 7 7"><path d="M0.5 4.5V0.5H4.5" fill="none" stroke="#444" stroke-width="0.9"/><path d="M2.3 2.3L6.2 6.2M6.2 3.4V6.2H3.4" fill="none" stroke="#444" stroke-width="0.9"/></svg>
<svg class="b" style="left:259.0px;top:90.0px;" width="7" height="7" viewBox="0 0 7 7"><path d="M0.5 4.5V0.5H4.5" fill="none" stroke="#444" stroke-width="0.9"/><path d="M2.3 2.3L6.2 6.2M6.2 3.4V6.2H3.4" fill="none" stroke="#444" stroke-width="0.9"/></svg>
<svg class="b" style="left:487.0px;top:90.5px;" width="7" height="7" viewBox="0 0 7 7"><path d="M0.5 4.5V0.5H4.5" fill="none" stroke="#444" stroke-width="0.9"/><path d="M2.3 2.3L6.2 6.2M6.2 3.4V6.2H3.4" fill="none" stroke="#444" stroke-width="0.9"/></svg>
<svg class="b" style="left:612.0px;top:90.5px;" width="7" height="7" viewBox="0 0 7 7"><path d="M0.5 4.5V0.5H4.5" fill="none" stroke="#444" stroke-width="0.9"/><path d="M2.3 2.3L6.2 6.2M6.2 3.4V6.2H3.4" fill="none" stroke="#444" stroke-width="0.9"/></svg>
<svg class="b" style="left:175.70000000000002px;top:39px;" width="6.2" height="6" viewBox="0 0 6.2 6"><path d="M1 1.8 L3.1 3.9000000000000004 L5.2 1.8" fill="none" stroke="#333" stroke-width="1.2"/></svg>
<svg class="b" style="left:215.1px;top:39px;" width="6.2" height="6" viewBox="0 0 6.2 6"><path d="M1 1.8 L3.1 3.9000000000000004 L5.2 1.8" fill="none" stroke="#333" stroke-width="1.2"/></svg>
<svg class="b" style="left:227px;top:35px;" width="14" height="12" viewBox="0 0 14 12"><path d="M1.5 11 L5.5 1 L9.5 11 M3 7.3 H8" fill="none" stroke="#333" stroke-width="1.1"/><path d="M10.5 3 L12 1.6 L13.5 3" fill="none" stroke="#2e9a7a" stroke-width="0.9"/></svg>
<svg class="b" style="left:248px;top:36px;" width="12" height="11" viewBox="0 0 12 11"><path d="M1.5 10 L4.7 2.2 L7.9 10 M2.7 7 H6.7" fill="none" stroke="#333" stroke-width="1.1"/><path d="M8.3 1.2 L9.8 2.6 L11.3 1.2" fill="none" stroke="#2e9a7a" stroke-width="0.9"/></svg>
<div class="t" style="left:99.80px;top:60px;font-size:11px;line-height:13.20px;color:#303030;font-weight:bold;transform:scaleX(0.7071);transform-origin:0 0;-webkit-text-stroke:0.3px #303030;">B</div>
<svg class="b" style="left:119px;top:61px;" width="7" height="10" viewBox="0 0 7 10"><path d="M2.2 9.3 H5 M4 0.8 H6.6 M5.3 0.8 L3.5 9.3" fill="none" stroke="#444" stroke-width="1.1"/></svg>
<svg class="b" style="left:137px;top:61px;" width="9" height="12" viewBox="0 0 9 12"><path d="M2 0.5 V5.8 Q2 8.6 4.6 8.6 Q7.2 8.6 7.2 5.8 V0.5" fill="none" stroke="#444" stroke-width="1.1"/><path d="M1.2 10.8 H8" stroke="#444" stroke-width="1.1"/></svg>
<svg class="b" style="left:153.9px;top:64.2px;" width="6.2" height="6" viewBox="0 0 6.2 6"><path d="M1 1.8 L3.1 3.9000000000000004 L5.2 1.8" fill="none" stroke="#333" stroke-width="1.2"/></svg>
<svg class="b" style="left:169.5px;top:60px;" width="13" height="13" viewBox="0 0 13 13"><rect x="0.8" y="0.8" width="11.2" height="11.2" fill="none" stroke="#7a7a7a" stroke-width="1.1"/><path d="M6.4 1 V12 M1 6.4 H12" stroke="#9a9a9a" stroke-width="0.9"/><path d="M0.5 12 H12.3" stroke="#4a4a4a" stroke-width="1.3"/></svg>
<svg class="b" style="left:187.9px;top:64px;" width="6.2" height="6" viewBox="0 0 6.2 6"><path d="M1 1.8 L3.1 3.9000000000000004 L5.2 1.8" fill="none" stroke="#333" stroke-width="1.2"/></svg>
<svg class="b" style="left:203px;top:60px;" width="14" height="14" viewBox="0 0 14 14"><path d="M3 5.2 L6.4 1.8 L10.6 6 L7.2 9.4 Z" fill="#fff" stroke="#333" stroke-width="1.1" stroke-linejoin="round"/><path d="M9.4 3.2 Q11.8 3.4 11.6 6.6" fill="none" stroke="#333" stroke-width="1.1"/><rect x="0.8" y="10" width="12" height="3.6" fill="#e9ef3c"/></svg>
<svg class="b" style="left:221.4px;top:64px;" width="6.2" height="6" viewBox="0 0 6.2 6"><path d="M1 1.8 L3.1 3.9000000000000004 L5.2 1.8" fill="none" stroke="#333" stroke-width="1.2"/></svg>
<svg class="b" style="left:235px;top:60px;" width="14" height="14" viewBox="0 0 14 14"><path d="M3.5 8.8 L6.8 1.2 L10.1 8.8 M4.7 6.2 H8.9" fill="none" stroke="#333" stroke-width="1.1"/><rect x="0.8" y="10" width="12.2" height="3.4" fill="#c8202b"/></svg>
<svg class="b" style="left:253.9px;top:64px;" width="6.2" height="6" viewBox="0 0 6.2 6"><path d="M1 1.8 L3.1 3.9000000000000004 L5.2 1.8" fill="none" stroke="#333" stroke-width="1.2"/></svg>
<svg class="b" style="left:279px;top:35px;" width="14" height="14" viewBox="0 0 14 14"><path d="M0.6 0.8 H11.4 M3 4.2 H9 M0.6 7.3 H11.4 " stroke="#555" stroke-width="1.1" fill="none"/></svg>
<svg class="b" style="left:299px;top:37px;" width="14" height="14" viewBox="0 0 14 14"><path d="M0.5 1.3 H11.5 M2.5 4.3 H9.5 M0.5 7.5 H11.5 " stroke="#555" stroke-width="1.1" fill="none"/></svg>
<svg class="b" style="left:319.5px;top:40px;" width="14" height="14" viewBox="0 0 14 14"><path d="M0.5 1.2 H10.5 M2.5 4.3 H8.5 M0.5 7.5 H10.5 " stroke="#555" stroke-width="1.1" fill="none"/></svg>
<svg class="b" style="left:279.5px;top:61px;" width="14" height="14" viewBox="0 0 14 14"><path d="M0.5 0.6 H10.5 M0.5 3.8 H7.5 M0.5 6.9 H10.5 M0.5 10 H7.5 " stroke="#555" stroke-width="1.1" fill="none"/></svg>
<svg class="b" style="left:299px;top:61px;" width="14" height="14" viewBox="0 0 14 14"><path d="M0.5 0.6 H11.5 M2.5 3.8 H9.5 M0.5 7 H11.5 M2.5 10 H9.5 " stroke="#555" stroke-width="1.1" fill="none"/></svg>
<svg class="b" style="left:319.5px;top:61px;" width="14" height="14" viewBox="0 0 14 14"><path d="M0.5 0.6 H10.5 M3.5 3.8 H10.5 M0.5 6.9 H10.5 M3.5 10 H10.5 " stroke="#555" stroke-width="1.1" fill="none"/></svg>
<svg class="b" style="left:341px;top:61px;" width="12" height="12" viewBox="0 0 12 12"><path d="M0.5 0.6 H11 M5.5 3.8 H11 M5.5 6.9 H11 M0.5 10 H11" stroke="#555" stroke-width="1.1"/><path d="M4.3 5.3 H0.8 M2.4 3.6 L0.7 5.3 L2.4 7" fill="none" stroke="#2f86b8" stroke-width="1"/></svg>
<svg class="b" style="left:361px;top:61px;" width="12" height="12" viewBox="0 0 12 12"><path d="M0.5 0.6 H11 M5.5 3.8 H11 M5.5 6.9 H11 M0.5 10 H11" stroke="#555" stroke-width="1.1"/><path d="M0.5 5.3 H4 M2.3 3.6 L4 5.3 L2.3 7" fill="none" stroke="#2f86b8" stroke-width="1"/></svg>
<svg class="b" style="left:340px;top:34px;" width="16" height="14" viewBox="0 0 16 14"><g transform="rotate(-50 6 7)"><text x="1" y="10" font-size="8.5" font-family="Liberation Sans" fill="#444">ab</text></g><path d="M4 13 L14 3.5 M10.5 3.5 H14 V7" fill="none" stroke="#2f86b8" stroke-width="0.9"/></svg>
<svg class="b" style="left:357.4px;top:39.5px;" width="6.2" height="6" viewBox="0 0 6.2 6"><path d="M1 1.8 L3.1 3.9000000000000004 L5.2 1.8" fill="none" stroke="#333" stroke-width="1.2"/></svg>
<svg class="b" style="left:389px;top:35px;" width="13" height="13" viewBox="0 0 13 13"><text x="1.2" y="6" font-size="6.8" font-family="Liberation Sans" fill="#444">ab</text><text x="1.2" y="11.8" font-size="6.8" font-family="Liberation Sans" fill="#444">c</text><path d="M5.5 9.8 H9.5 Q11.8 9.8 11.8 7.7 Q11.8 5.8 9.6 5.8" fill="none" stroke="#2f86b8" stroke-width="1"/><path d="M7 8.3 L5.4 9.8 L7 11.3" fill="none" stroke="#2f86b8" stroke-width="1"/></svg>
<svg class="b" style="left:388px;top:60px;" width="14" height="14" viewBox="0 0 14 14"><rect x="1" y="0.8" width="11.8" height="11.8" fill="#ddeef9" stroke="#3f5e72" stroke-width="1.2"/><path d="M1 3.8 H12.8 M1 9.6 H12.8" stroke="#3f5e72" stroke-width="0.9"/><path d="M3 6.7 H10.8 M4.3 5.5 L3 6.7 L4.3 7.9 M9.5 5.5 L10.8 6.7 L9.5 7.9" fill="none" stroke="#2f86b8" stroke-width="0.9"/></svg>
<svg class="b" style="left:479.9px;top:64.5px;" width="6.2" height="6" viewBox="0 0 6.2 6"><path d="M1 1.8 L3.1 3.9000000000000004 L5.2 1.8" fill="none" stroke="#333" stroke-width="1.2"/></svg>
<svg class="b" style="left:606.9px;top:39.2px;" width="6.2" height="6" viewBox="0 0 6.2 6"><path d="M1 1.8 L3.1 3.9000000000000004 L5.2 1.8" fill="none" stroke="#333" stroke-width="1.2"/></svg>
<svg class="b" style="left:504.5px;top:62px;" width="15" height="12" viewBox="0 0 15 12"><rect x="0.8" y="1" width="11.5" height="7.8" fill="#fff" stroke="#555" stroke-width="1.3"/><text x="2.2" y="7.6" font-size="6" font-family="Liberation Sans" fill="#555">Cr</text><rect x="7.8" y="5.3" width="6" height="5.6" fill="#fde2b8" stroke="#e4a04a" stroke-width="0.9"/><path d="M9.2 8.1 H12.4" stroke="#e4a04a" stroke-width="0.7"/><path d="M9.6 5.3 V3.8 H12 V5.3" fill="none" stroke="#e4a04a" stroke-width="0.8"/></svg>
<svg class="b" style="left:523.0px;top:64.2px;" width="6" height="6" viewBox="0 0 6 6"><path d="M1 1.8 L3.0 3.8 L5 1.8" fill="none" stroke="#333" stroke-width="1.1"/></svg>
<div class="t" style="left:538.00px;top:61px;font-size:12.5px;line-height:15.00px;color:#383838;font-weight:normal;transform:scaleX(0.9888);transform-origin:0 0;">%</div>
<svg class="b" style="left:561px;top:62px;" width="8" height="11" viewBox="0 0 8 11"><circle cx="3.8" cy="3.3" r="2.4" fill="#333"/><path d="M5.6 3.6 Q5.6 8 1.8 9.6" fill="none" stroke="#333" stroke-width="1.6"/></svg>
<svg class="b" style="left:579px;top:61px;" width="14" height="12" viewBox="0 0 14 12"><text x="7" y="6" font-size="7.4" font-family="Liberation Sans" fill="#444" transform="scale(0.8 1)" transform-origin="7 6">0</text><text x="1.6" y="11.6" font-size="7.4" font-family="Liberation Sans" fill="#444" letter-spacing="-0.6">.00</text><path d="M6 3.4 H1 M2.7 1.7 L0.9 3.4 L2.7 5.1" fill="none" stroke="#2f86b8" stroke-width="0.9"/></svg>
<svg class="b" style="left:599px;top:61px;" width="14" height="12" viewBox="0 0 14 12"><text x="2" y="6" font-size="7.4" font-family="Liberation Sans" fill="#444" letter-spacing="-0.6">.00</text><text x="8" y="11.6" font-size="7.4" font-family="Liberation Sans" fill="#444">0</text><path d="M0.8 9.2 H7 M5.3 7.5 L7.1 9.2 L5.3 10.9" fill="none" stroke="#2f86b8" stroke-width="0.9"/></svg>
<svg class="b" style="left:645px;top:32.5px;" width="23" height="18" viewBox="0 0 23 18"><path d="M0.6 0.6 H21.4 V17 H0.6 Z M0.6 6 H21.4 M0.6 11.2 H21.4 M4.5 0.6 V17 M17.7 0.6 V17" fill="none" stroke="#6a6a6a" stroke-width="1.05"/><rect x="4.5" y="0.6" width="9" height="5.4" fill="#f08a94" stroke="#9e3a44" stroke-width="1"/><rect x="4.5" y="11.2" width="11" height="5.8" fill="#f08a94" stroke="#9e3a44" stroke-width="1"/><rect x="4.5" y="6" width="6" height="5.2" fill="#8aa6dc" stroke="#3c4c7c" stroke-width="0.9"/></svg>
<svg class="b" style="left:675.2px;top:71.3px;" width="5.6" height="6" viewBox="0 0 5.6 6"><path d="M1 1.8 L2.8 3.6 L4.6 1.8" fill="none" stroke="#444" stroke-width="1"/></svg>
<svg class="b" style="left:697px;top:32.5px;" width="25" height="21" viewBox="0 0 25 21"><rect x="7.6" y="6" width="14" height="11" fill="#6aafe8"/><path d="M0.6 0.6 H21.4 V17 H0.6 Z M0.6 6 H21.4 M0.6 11.5 H21.4 M7.6 0.6 V17 M14.5 0.6 V17" fill="none" stroke="#6a6a6a" stroke-width="1.05"/><path d="M11.8 15.4 L22 4.4 L24.2 6.4 L13.8 17.4 Z" fill="#fff" stroke="#444" stroke-width="1"/><path d="M7.6 21 Q7.6 16.6 11.6 15.2 L14 17.6 Q12.6 21.2 7.6 21 Z" fill="#5aa6e6" stroke="#2f7cc0" stroke-width="0.8"/></svg>
<svg class="b" style="left:717.2px;top:71.3px;" width="5.6" height="6" viewBox="0 0 5.6 6"><path d="M1 1.8 L2.8 3.6 L4.6 1.8" fill="none" stroke="#444" stroke-width="1"/></svg>
<svg class="b" style="left:738px;top:32.5px;" width="25" height="21" viewBox="0 0 25 21"><rect x="3.6" y="4" width="14" height="9.5" fill="#5aa6e6"/><path d="M0.6 0.6 H21.4 V17 H0.6 Z M0.6 4 H21.4 M0.6 13.5 H21.4 M3.6 0.6 V17 M17.6 0.6 V17" fill="none" stroke="#6a6a6a" stroke-width="1.05"/><path d="M11.8 15.4 L22 4.4 L24.2 6.4 L13.8 17.4 Z" fill="#fff" stroke="#444" stroke-width="1"/><path d="M7.6 21 Q7.6 16.6 11.6 15.2 L14 17.6 Q12.6 21.2 7.6 21 Z" fill="#5aa6e6" stroke="#2f7cc0" stroke-width="0.8"/></svg>
<svg class="b" style="left:758.2px;top:71.3px;" width="5.6" height="6" viewBox="0 0 5.6 6"><path d="M1 1.8 L2.8 3.6 L4.6 1.8" fill="none" stroke="#444" stroke-width="1"/></svg>
<svg class="b" style="left:782px;top:32px;" width="26" height="18" viewBox="0 0 26 18"><path d="M2.6 0.7 H24.4 V17 H2.6 Z M2.6 6 H24.4 M2.6 11.5 H24.4 M10.5 0.7 V17 M17.6 0.7 V17" fill="none" stroke="#6a6a6a" stroke-width="1.05"/><rect x="4" y="6.3" width="21.5" height="5" fill="#4a9ad8"/><path d="M6.5 4.2 L1.2 8.8 L6.5 13.4" fill="none" stroke="#8cc4ec" stroke-width="1.1"/><path d="M4 8.8 H16" stroke="#b9dcf5" stroke-width="1"/></svg>
<svg class="b" style="left:792.5px;top:71.8px;" width="6" height="6" viewBox="0 0 6 6"><path d="M1 1.8 L3.0 3.8 L5 1.8" fill="none" stroke="#333" stroke-width="1.2"/></svg>
<svg class="b" style="left:817px;top:32px;" width="26" height="18" viewBox="0 0 26 18"><path d="M1.3 0.7 H22.5 V17 H1.3 Z M1.3 6 H15 M1.3 11.5 H15 M8.2 0.7 V17 M15 0.7 V17" fill="none" stroke="#6a6a6a" stroke-width="1.05"/><rect x="4" y="6.3" width="11" height="5" fill="#4a9ad8"/><path d="M16 4.2 L23.6 13.8 M23.6 4.2 L16 13.8" stroke="#e06a70" stroke-width="1.1"/></svg>
<svg class="b" style="left:826.5px;top:71.8px;" width="6" height="6" viewBox="0 0 6 6"><path d="M1 1.8 L3.0 3.8 L5 1.8" fill="none" stroke="#333" stroke-width="1.2"/></svg>
<svg class="b" style="left:851px;top:28px;" width="24" height="22" viewBox="0 0 24 22"><path d="M6 1.8 H19" stroke="#3f5e72" stroke-width="1.6"/><rect x="7.8" y="10.5" width="9.5" height="5.5" fill="#4a9ad8"/><path d="M1.3 4.7 H22.7 V21 H1.3 Z M1.3 10.3 H22.7 M1.3 16 H22.7 M7.6 4.7 V21 M17.4 4.7 V21" fill="none" stroke="#6a6a6a" stroke-width="1.05"/></svg>
<svg class="b" style="left:859.5px;top:70.5px;" width="6" height="6" viewBox="0 0 6 6"><path d="M1 1.8 L3.0 3.8 L5 1.8" fill="none" stroke="#333" stroke-width="1.2"/></svg>
<svg class="b" style="left:896px;top:29.5px;" width="11" height="12.5" viewBox="0 0 11 12.5"><path d="M10.2 1.2 H1 L5.6 6.2 L1 11.2 H10.2" fill="none" stroke="#444" stroke-width="1.2" stroke-linejoin="miter"/></svg>
<svg class="b" style="left:913.0px;top:32.8px;" width="6" height="6" viewBox="0 0 6 6"><path d="M1 1.8 L3.0 3.8 L5 1.8" fill="none" stroke="#333" stroke-width="1.2"/></svg>
<svg class="b" style="left:894.5px;top:49.5px;" width="14" height="12.5" viewBox="0 0 14 12.5"><rect x="1" y="1.2" width="12" height="10.4" fill="#eaf3fb" stroke="#555" stroke-width="1.2"/><path d="M1 1.8 H13" stroke="#444" stroke-width="2"/><path d="M7 3.6 V9 M4.8 6.8 L7 9 L9.2 6.8" fill="none" stroke="#2f86b8" stroke-width="1"/></svg>
<svg class="b" style="left:911.5px;top:53.5px;" width="6" height="6" viewBox="0 0 6 6"><path d="M1 1.8 L3.0 3.8 L5 1.8" fill="none" stroke="#333" stroke-width="1.2"/></svg>
<svg class="b" style="left:894.5px;top:69px;" width="14" height="13" viewBox="0 0 14 13"><path d="M1.5 8.2 L7.8 1.9 L12 6.1 L5.7 12.4 Z" fill="#fff" stroke="#a650b8" stroke-width="1.1" stroke-linejoin="round"/><path d="M1.5 8.2 L4 5.7 L8.2 9.9 L5.7 12.4 Z" fill="#d8a6e2" stroke="#a650b8" stroke-width="1.1" stroke-linejoin="round"/></svg>
<svg class="b" style="left:911.5px;top:73.5px;" width="6" height="6" viewBox="0 0 6 6"><path d="M1 1.8 L3.0 3.8 L5 1.8" fill="none" stroke="#333" stroke-width="1.2"/></svg>
<svg class="b" style="left:927px;top:30px;" width="27" height="23" viewBox="0 0 27 23"><path d="M2.5 10 L6.3 1 L10.1 10 M3.7 7 H8.9" fill="none" stroke="#3a98c8" stroke-width="1.2"/><path d="M2 12.5 H9.6 L2 21.4 H9.8" fill="none" stroke="#444" stroke-width="1.2"/><path d="M12.3 5.8 H24.8 L20 11.8 V17.6 H17 V11.8 Z" fill="none" stroke="#444" stroke-width="1.2" stroke-linejoin="round"/></svg>
<svg class="b" style="left:948.0px;top:71.3px;" width="6" height="6" viewBox="0 0 6 6"><path d="M1 1.8 L3.0 3.8 L5 1.8" fill="none" stroke="#444" stroke-width="1.1"/></svg>
<svg class="b" style="left:962px;top:29px;" width="28" height="25" viewBox="0 0 28 25"><circle cx="17" cy="9.4" r="7.6" fill="none" stroke="#444" stroke-width="1.2"/><path d="M11.6 14.8 L2.8 23.6" stroke="#444" stroke-width="1.2"/></svg>
<svg class="b" style="left:986.0px;top:71.3px;" width="6" height="6" viewBox="0 0 6 6"><path d="M1 1.8 L3.0 3.8 L5 1.8" fill="none" stroke="#444" stroke-width="1.1"/></svg>
<svg class="b" style="left:1020px;top:29.5px;" width="24" height="24" viewBox="0 0 24 24"><path d="M1.3 1 H16.5 V22.5 H1.3 Z" fill="#fafafa" stroke="#cfcfcf" stroke-width="1.2"/><path d="M8 17 L17.5 7 L21 10.5 L11.5 20.5 Z" fill="#fff" stroke="#cdcdcd" stroke-width="1.2"/><path d="M17 3.5 L19.5 1 L23 4.5 L20.5 7" fill="#fff" stroke="#cdcdcd" stroke-width="1.2"/><path d="M10 14.8 L15.5 9.3 M11.6 16.6 L17 11" stroke="#d4d4d4" stroke-width="0.9"/></svg>
<svg class="b" style="left:1026.0px;top:70.5px;" width="6" height="6" viewBox="0 0 6 6"><path d="M1 1.8 L3.0 3.8 L5 1.8" fill="none" stroke="#bdbdbd" stroke-width="1.1"/></svg>
<svg class="b" style="left:1070px;top:29.5px;" width="24" height="23" viewBox="0 0 24 23"><rect x="1" y="1" width="21.5" height="21" fill="#fdf0e8" stroke="#dc7a52" stroke-width="1.3"/><rect x="4" y="4" width="6.8" height="6.6" fill="#fff" stroke="#dc7a52" stroke-width="1.1"/><rect x="12.8" y="4" width="6.8" height="6.6" fill="#fff" stroke="#dc7a52" stroke-width="1.1"/><rect x="4" y="12.5" width="6.8" height="6.6" fill="#fff" stroke="#dc7a52" stroke-width="1.1"/><rect x="12.8" y="12.5" width="6.8" height="6.6" fill="#fff" stroke="#dc7a52" stroke-width="1.1"/></svg>
<svg class="b" style="left:1118px;top:29.5px;" width="25" height="24" viewBox="0 0 25 24"><path d="M1 1 H22.2 V22.5 H1 Z M1 4 H22.2 M1 15.5 H22.2 M7 15.5 V22.5 M14 15.5 V22.5" fill="#fff" stroke="#6a6a6a" stroke-width="1.1"/><path d="M16 15 L22.5 21.8" stroke="#555" stroke-width="1.1"/><circle cx="11" cy="10.3" r="6" fill="#eef6fc" stroke="#3c5f78" stroke-width="1.2"/><rect x="8" y="9.5" width="1.7" height="4" fill="#6a6a6a"/><rect x="10.3" y="7" width="1.7" height="6.5" fill="#3a8fcf"/><rect x="12.6" y="8.3" width="1.7" height="5.2" fill="#3a8fcf"/></svg>
<svg class="b" style="left:1177px;top:87px;" width="11" height="7" viewBox="0 0 11 7"><path d="M1 1.2 L5.5 5.5 L10 1.2" fill="none" stroke="#444" stroke-width="1.1"/></svg>
<svg class="b" style="left:1181px;top:113px;" width="11" height="7" viewBox="0 0 11 7"><path d="M1 1.2 L5.5 5.6 L10 1.2" fill="none" stroke="#444" stroke-width="1.1"/></svg>
<svg class="b" style="left:1059.5px;top:7.5px;" width="10" height="9" viewBox="0 0 10 9"><path d="M1 1 H8.6 V6.4 H3.8 L1.6 8.4 V6.4 H1 Z" fill="none" stroke="#444" stroke-width="1" stroke-linejoin="round"/></svg>
<svg class="b" style="left:1137.5px;top:7.5px;" width="12" height="10" viewBox="0 0 12 10"><path d="M1 4.5 V9.2 H9.6 V6.8" fill="none" stroke="#fff" stroke-width="1"/><path d="M2.8 7.2 Q3.4 3.3 7.6 3.3 V1 L10.8 3.9 L7.6 6.8 V4.8 Q4.8 4.8 2.8 7.2 Z" fill="none" stroke="#fff" stroke-width="0.9" stroke-linejoin="round"/></svg>
<svg class="b" style="left:1182.3px;top:10.3px;" width="7" height="5" viewBox="0 0 7 5"><path d="M1 1 L3.3 3.2 L5.6 1" fill="none" stroke="#fff" stroke-width="1.1"/></svg>
<svg class="b" style="left:24px;top:136.5px;" width="10" height="13" viewBox="0 0 10 13"><path d="M2.3 0.5 L7 9.2 M7.7 0.5 L3 9.2" stroke="#555" stroke-width="0.9" fill="none"/><circle cx="2.4" cy="10.6" r="1.6" fill="none" stroke="#3e8fc0" stroke-width="1.1"/><circle cx="7.6" cy="10.6" r="1.6" fill="none" stroke="#3e8fc0" stroke-width="1.1"/></svg>
<svg class="b" style="left:22px;top:158px;" width="14" height="14" viewBox="0 0 14 14"><path d="M5.5 1 H1.2 V11 H5" fill="none" stroke="#555" stroke-width="1.1"/><path d="M5.2 3.5 H10 L12.8 6.3 V12.5 H5.2 Z" fill="#fff" stroke="#555" stroke-width="1.1"/><path d="M10 3.5 V6.3 H12.8" fill="none" stroke="#555" stroke-width="0.9"/><path d="M7 8.8 H11 M7 10.6 H11" stroke="#777" stroke-width="0.7"/></svg>
<svg class="b" style="left:23.5px;top:180px;" width="15" height="15" viewBox="0 0 15 15"><rect x="1" y="2.8" width="10.6" height="10.8" rx="0.8" fill="#fff" stroke="#dfa55a" stroke-width="1.1"/><path d="M3.5 4.4 V2.6 H5 L6.3 0.6 L7.6 2.6 H9.1 V4.4 Z" fill="#fff" stroke="#777" stroke-width="0.9"/><rect x="6.6" y="6" width="6.6" height="8" fill="#fff" stroke="#666" stroke-width="1.1"/></svg>
<svg class="b" style="left:44px;top:207px;" width="15" height="15" viewBox="0 0 15 15"><rect x="1" y="2.8" width="10.6" height="10.8" rx="0.8" fill="#fff" stroke="#dfa55a" stroke-width="1.1"/><path d="M3.5 4.4 V2.6 H5 L6.3 0.6 L7.6 2.6 H9.1 V4.4 Z" fill="#fff" stroke="#777" stroke-width="0.9"/><rect x="6.6" y="6" width="6.6" height="8" fill="#fff" stroke="#666" stroke-width="1.1"/></svg>
<svg class="b" style="left:68px;top:207px;" width="15" height="15" viewBox="0 0 15 15"><rect x="1" y="2.8" width="10.6" height="10.8" rx="0.8" fill="#fff" stroke="#dfa55a" stroke-width="1.1"/><path d="M3.5 4.4 V2.6 H5 L6.3 0.6 L7.6 2.6 H9.1 V4.4 Z" fill="#fff" stroke="#777" stroke-width="0.9"/><rect x="2.5" y="8" width="11.5" height="6.5" fill="#fff"/><text x="2.6" y="14" font-size="6.6" font-family="Liberation Sans" fill="#555">123</text></svg>
<svg class="b" style="left:92px;top:207px;" width="15" height="15" viewBox="0 0 15 15"><rect x="1" y="2.8" width="10.6" height="10.8" rx="0.8" fill="#fff" stroke="#dfa55a" stroke-width="1.1"/><path d="M3.5 4.4 V2.6 H5 L6.3 0.6 L7.6 2.6 H9.1 V4.4 Z" fill="#fff" stroke="#777" stroke-width="0.9"/><rect x="6" y="7.5" width="7" height="7" fill="#fff"/><text x="6.2" y="14" font-size="7.5" font-style="italic" font-family="Liberation Serif" fill="#333">fx</text></svg>
<svg class="b" style="left:116px;top:207px;" width="15" height="15" viewBox="0 0 15 15"><rect x="1" y="2.8" width="10.6" height="10.8" rx="0.8" fill="#fff" stroke="#dfa55a" stroke-width="1.1"/><path d="M3.5 4.4 V2.6 H5 L6.3 0.6 L7.6 2.6 H9.1 V4.4 Z" fill="#fff" stroke="#777" stroke-width="0.9"/><rect x="6" y="7" width="8" height="8" fill="#fff"/><path d="M8 8.8 V13.3 M6.5 11.8 L8 13.3 L9.5 11.8 M8 8.8 H12.5" fill="none" stroke="#2f86b8" stroke-width="1"/><path d="M11.2 7.4 L12.7 8.8 L11.2 10.2" fill="none" stroke="#2f86b8" stroke-width="0.9"/></svg>
<svg class="b" style="left:139.5px;top:207px;" width="15" height="15" viewBox="0 0 15 15"><rect x="1" y="2.8" width="10.6" height="10.8" rx="0.8" fill="#fff" stroke="#dfa55a" stroke-width="1.1"/><path d="M3.5 4.4 V2.6 H5 L6.3 0.6 L7.6 2.6 H9.1 V4.4 Z" fill="#fff" stroke="#777" stroke-width="0.9"/><path d="M6 12.5 L12.8 5 L14.6 6.8 L7.8 14.2 Z" fill="#fff" stroke="#444" stroke-width="0.9"/><path d="M4.6 14.8 Q4.8 12.6 6.2 12.4 L7.8 14 Q7 15 4.6 14.8 Z" fill="#2f86b8"/><path d="M4 7 L7 7" stroke="#7a9ab8" stroke-width="1"/></svg>
<svg class="b" style="left:163px;top:207px;" width="15" height="15" viewBox="0 0 15 15"><rect x="1" y="2.8" width="10.6" height="10.8" rx="0.8" fill="#fff" stroke="#dfa55a" stroke-width="1.1"/><path d="M3.5 4.4 V2.6 H5 L6.3 0.6 L7.6 2.6 H9.1 V4.4 Z" fill="#fff" stroke="#777" stroke-width="0.9"/><rect x="5" y="9" width="10" height="5" fill="#fff"/><rect x="5.5" y="10" width="5" height="3.2" rx="1.6" fill="none" stroke="#2f86b8" stroke-width="1"/><rect x="9" y="10" width="5" height="3.2" rx="1.6" fill="none" stroke="#2f86b8" stroke-width="1"/></svg>
<svg class="b" style="left:23px;top:325.5px;" width="12" height="13" viewBox="0 0 12 13"><rect x="1" y="1" width="9.6" height="11.4" fill="none" stroke="#555" stroke-width="1.1"/><rect x="3.2" y="3.6" width="1.8" height="1.8" fill="#555"/><rect x="3.2" y="7.6" width="1.8" height="1.8" fill="#555"/><rect x="6.4" y="3.6" width="1.8" height="1.8" fill="#888"/><rect x="6.4" y="7.6" width="1.8" height="1.8" fill="#888"/></svg>
<svg class="b" style="left:22px;top:417.5px;" width="14" height="13" viewBox="0 0 14 13"><path d="M1 1 H12.6 V5.5 M1 1 V12 H6 M1 4.3 H12.6 M1 7.6 H6 M4.5 1 V12 M8.4 1 V5.5" fill="none" stroke="#555" stroke-width="1.05"/><rect x="1" y="1" width="11.6" height="3.3" fill="#555" opacity="0.55"/><path d="M8 9 A3 3 0 1 0 9.6 6.3" fill="none" stroke="#2f86b8" stroke-width="1.1"/><path d="M8 6 L9.8 6.3 L9.4 8" fill="none" stroke="#2f86b8" stroke-width="0.9"/></svg>
<svg class="b" style="left:54.2px;top:459.5px;" width="6" height="6" viewBox="0 0 6 6"><path d="M1 1.8 L3.0 3.8 L5 1.8" fill="none" stroke="#333" stroke-width="1.1"/></svg>
<svg class="b" style="left:87.8px;top:459.5px;" width="6" height="6" viewBox="0 0 6 6"><path d="M1 1.8 L3.0 3.8 L5 1.8" fill="none" stroke="#333" stroke-width="1.1"/></svg>
<svg class="b" style="left:99.5px;top:455px;" width="13" height="12" viewBox="0 0 13 12"><path d="M1.5 10.5 L5.2 1.3 L8.9 10.5 M2.9 7 H7.5" fill="none" stroke="#333" stroke-width="1.05"/><path d="M9.6 2.8 L10.9 1.6 L12.2 2.8" fill="none" stroke="#555" stroke-width="0.8"/></svg>
<svg class="b" style="left:119.5px;top:456px;" width="12" height="11" viewBox="0 0 12 11"><path d="M1.3 9.5 L4.2 2.2 L7.1 9.5 M2.4 6.7 H6" fill="none" stroke="#333" stroke-width="1.05"/><path d="M8 1.3 L9.3 2.5 L10.6 1.3" fill="none" stroke="#555" stroke-width="0.8"/></svg>
<svg class="b" style="left:136.5px;top:457px;" width="15" height="12" viewBox="0 0 15 12"><rect x="0.8" y="0.8" width="10.5" height="7.2" fill="#fff" stroke="#555" stroke-width="1.2"/><text x="2" y="6.8" font-size="5.4" font-family="Liberation Sans" fill="#555">Cr</text><rect x="7.3" y="4.8" width="5.5" height="5.2" fill="#fde2b8" stroke="#e4a04a" stroke-width="0.9"/><path d="M8.6 7.5 H11.6" stroke="#e4a04a" stroke-width="0.7"/><path d="M9 4.8 V3.4 H11.2 V4.8" fill="none" stroke="#e4a04a" stroke-width="0.8"/></svg>
<svg class="b" style="left:154.4px;top:459.5px;" width="6" height="6" viewBox="0 0 6 6"><path d="M1 1.8 L3.0 3.8 L5 1.8" fill="none" stroke="#333" stroke-width="1.1"/></svg>
<div class="t" style="left:168.00px;top:455px;font-size:13.5px;line-height:16.20px;color:#383838;font-weight:normal;transform:scaleX(0.9904);transform-origin:0 0;">%</div>
<svg class="b" style="left:189px;top:457px;" width="8" height="11" viewBox="0 0 8 11"><circle cx="3.9" cy="3.3" r="2.5" fill="#333"/><path d="M5.8 3.6 Q5.8 8.2 1.8 9.8" fill="none" stroke="#333" stroke-width="1.7"/></svg>
<svg class="b" style="left:204.5px;top:455px;" width="14" height="13" viewBox="0 0 14 13"><rect x="1" y="0.8" width="11.6" height="11.6" fill="#ddeef9" stroke="#3f5e72" stroke-width="1.2"/><path d="M1 3.8 H12.6 M1 9.4 H12.6" stroke="#3f5e72" stroke-width="0.9"/><path d="M3 6.6 H10.6 M4.3 5.4 L3 6.6 L4.3 7.8 M9.3 5.4 L10.6 6.6 L9.3 7.8" fill="none" stroke="#2f86b8" stroke-width="0.9"/></svg>
<div class="t" style="left:23.00px;top:474px;font-size:10.3px;line-height:12.36px;color:#303030;font-weight:bold;transform:scaleX(0.7416);transform-origin:0 0;">B</div>
<svg class="b" style="left:41px;top:475px;" width="7" height="10" viewBox="0 0 7 10"><path d="M1.8 8.6 H4.5 M3.5 0.8 H6.2 M4.9 0.8 L3.1 8.6" fill="none" stroke="#444" stroke-width="1.05"/></svg>
<svg class="b" style="left:57px;top:474px;" width="12" height="13" viewBox="0 0 12 13"><path d="M0.8 1.5 H10.8 M2.6 4.5 H9 M0.8 7.5 H10.8 M2.6 10.5 H9" stroke="#444" stroke-width="1"/></svg>
<svg class="b" style="left:74px;top:474px;" width="15" height="14" viewBox="0 0 15 14"><path d="M3 4.8 L6.2 1.6 L10.2 5.6 L7 8.8 Z" fill="#fff" stroke="#333" stroke-width="1.05" stroke-linejoin="round"/><path d="M9 3 Q11.3 3.2 11.1 6.2" fill="none" stroke="#333" stroke-width="1.05"/><rect x="0.5" y="10.2" width="13.6" height="3.2" fill="#e9ef3c"/></svg>
<svg class="b" style="left:93.0px;top:478px;" width="6" height="6" viewBox="0 0 6 6"><path d="M1 1.8 L3.0 3.8 L5 1.8" fill="none" stroke="#333" stroke-width="1.1"/></svg>
<svg class="b" style="left:105.5px;top:474px;" width="14" height="14" viewBox="0 0 14 14"><path d="M4 8.6 L7.2 1.2 L10.4 8.6 M5.2 6 H9.2" fill="none" stroke="#333" stroke-width="1.05"/><rect x="0.5" y="10.4" width="13" height="3" fill="#c8202b"/></svg>
<svg class="b" style="left:124.0px;top:478px;" width="6" height="6" viewBox="0 0 6 6"><path d="M1 1.8 L3.0 3.8 L5 1.8" fill="none" stroke="#333" stroke-width="1.1"/></svg>
<svg class="b" style="left:136.5px;top:473.5px;" width="13" height="13" viewBox="0 0 13 13"><rect x="0.8" y="0.8" width="11" height="11" fill="none" stroke="#6a6a6a" stroke-width="1"/><path d="M6.3 1 V11.8 M1 6.3 H11.8" stroke="#8a8a8a" stroke-width="0.9"/><path d="M0.5 11.8 H12.1" stroke="#444" stroke-width="1.3"/></svg>
<svg class="b" style="left:155.0px;top:478px;" width="6" height="6" viewBox="0 0 6 6"><path d="M1 1.8 L3.0 3.8 L5 1.8" fill="none" stroke="#333" stroke-width="1.1"/></svg>
<svg class="b" style="left:167.5px;top:473.5px;" width="14" height="13" viewBox="0 0 14 13"><text x="6.4" y="5.6" font-size="6.6" font-family="Liberation Sans" fill="#444">0</text><text x="2.6" y="11.8" font-size="6.6" font-family="Liberation Sans" fill="#444">.00</text><path d="M5.8 3.3 H1 M2.7 1.6 L0.9 3.3 L2.7 5" fill="none" stroke="#2f86b8" stroke-width="0.9"/></svg>
<svg class="b" style="left:185.5px;top:473.5px;" width="14" height="13" viewBox="0 0 14 13"><text x="3.2" y="5.6" font-size="6.6" font-family="Liberation Sans" fill="#444">.00</text><text x="8.4" y="11.8" font-size="6.6" font-family="Liberation Sans" fill="#444">0</text><path d="M1 9.3 H7 M5.3 7.6 L7.1 9.3 L5.3 11" fill="none" stroke="#2f86b8" stroke-width="0.9"/></svg>
<svg class="b" style="left:204.5px;top:473.5px;" width="14" height="13" viewBox="0 0 14 13"><path d="M1.2 8.6 L5.4 4.4 L9.6 8.6 L5.4 12.6 Q3 11.5 1.2 8.6 Z" fill="#fbe2b6" stroke="#e3a04c" stroke-width="1" stroke-linejoin="round"/><path d="M4.6 5.2 L8.8 9.4" stroke="#3c3c3c" stroke-width="2"/><path d="M7.6 6.4 L12.2 1.8" stroke="#5a5a5a" stroke-width="2.2" stroke-linecap="round"/></svg>
</body></html>
